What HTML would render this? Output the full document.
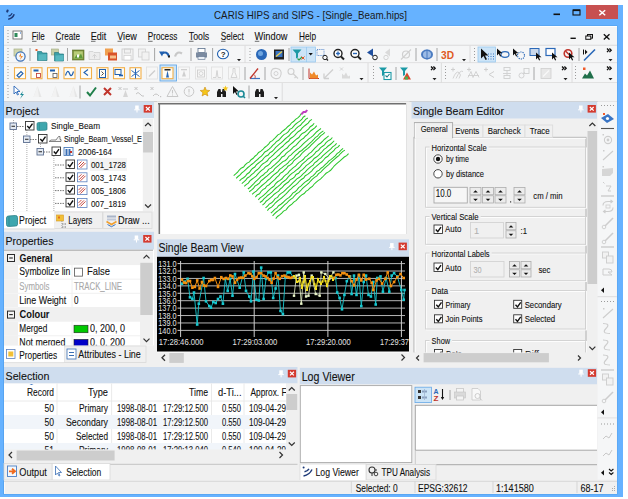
<!DOCTYPE html>
<html><head><meta charset="utf-8"><style>
html,body{margin:0;padding:0;background:#fff;width:628px;height:499px;overflow:hidden}
svg{display:block;font-family:"Liberation Sans",sans-serif}
</style></head><body>
<svg width="628" height="499" viewBox="0 0 628 499">
<rect x="0" y="0" width="628" height="499" fill="#fff" />
<rect x="0" y="5" width="623" height="492" fill="#66B2FF" />
<rect x="3.4" y="25.5" width="614" height="469" fill="#4E9CE8" />
<rect x="4" y="26" width="613" height="468" fill="#F0F0F0" />
<path d="M7.2,10.5 a1,1 0 1,0 0.1,0" fill="#1D3A78" />
<circle cx="7.6" cy="10.6" r="1.1" fill="#1D3A78"/>
<path d="M8.5,16.2 Q11,15.5 12.2,13.2" fill="none" stroke="#1D3A78" stroke-width="1.3" />
<path d="M8.2,19.2 Q12.5,18.5 14.2,14.2" fill="none" stroke="#1D3A78" stroke-width="1.6" />
<text x="214" y="19.1" font-size="11" fill="#1A1A1A" textLength="193" lengthAdjust="spacingAndGlyphs" >CARIS HIPS and SIPS - [Single_Beam.hips]</text>
<rect x="553.5" y="13.5" width="6.5" height="1.6" fill="#111" />
<rect x="573" y="10" width="7" height="5" fill="none" stroke="#111" stroke-width="1.1" />
<rect x="573" y="9.5" width="7" height="1.6" fill="#111" />
<rect x="586" y="5" width="32" height="14" fill="#C75050" />
<path d="M599.3,10.2 L605.2,15.2 M605.2,10.2 L599.3,15.2" fill="none" stroke="#fff" stroke-width="1.5" />
<rect x="4" y="26" width="613" height="1" fill="#FFFFFF" />
<rect x="4" y="27" width="613" height="18" fill="#F4F5F6" />
<line x1="4" y1="45.3" x2="617" y2="45.3" stroke="#CFCFCF" stroke-width="0.8" />
<rect x="7.5" y="30" width="1" height="1" fill="#9A9A9A" />
<rect x="7.5" y="33" width="1" height="1" fill="#9A9A9A" />
<rect x="7.5" y="36" width="1" height="1" fill="#9A9A9A" />
<rect x="7.5" y="39" width="1" height="1" fill="#9A9A9A" />
<rect x="7.5" y="42" width="1" height="1" fill="#9A9A9A" />
<rect x="13" y="31" width="9" height="8" fill="#fff" stroke="#6A6A6A" stroke-width="0.9" />
<rect x="14.5" y="33" width="3" height="4" fill="#2E8A5A" />
<rect x="20" y="32.5" width="1" height="1" fill="#2266BB" />
<text x="31.7" y="39.9" font-size="10.7" fill="#111" textLength="13" lengthAdjust="spacingAndGlyphs" stroke="#111" stroke-width="0.1" >File</text>
<line x1="32.0" y1="41.3" x2="36.5" y2="41.3" stroke="#333" stroke-width="0.7" />
<text x="55.6" y="39.9" font-size="10.7" fill="#111" textLength="24.3" lengthAdjust="spacingAndGlyphs" stroke="#111" stroke-width="0.1" >Create</text>
<line x1="55.9" y1="41.3" x2="60.4" y2="41.3" stroke="#333" stroke-width="0.7" />
<text x="90.7" y="39.9" font-size="10.7" fill="#111" textLength="15.5" lengthAdjust="spacingAndGlyphs" stroke="#111" stroke-width="0.1" >Edit</text>
<line x1="91.0" y1="41.3" x2="95.5" y2="41.3" stroke="#333" stroke-width="0.7" />
<text x="117.2" y="39.9" font-size="10.7" fill="#111" textLength="19.6" lengthAdjust="spacingAndGlyphs" stroke="#111" stroke-width="0.1" >View</text>
<line x1="117.5" y1="41.3" x2="122.0" y2="41.3" stroke="#333" stroke-width="0.7" />
<text x="147.8" y="39.9" font-size="10.7" fill="#111" textLength="29.5" lengthAdjust="spacingAndGlyphs" stroke="#111" stroke-width="0.1" >Process</text>
<line x1="148.10000000000002" y1="41.3" x2="152.60000000000002" y2="41.3" stroke="#333" stroke-width="0.7" />
<text x="188.75" y="39.9" font-size="10.7" fill="#111" textLength="20.5" lengthAdjust="spacingAndGlyphs" stroke="#111" stroke-width="0.1" >Tools</text>
<line x1="189.05" y1="41.3" x2="193.55" y2="41.3" stroke="#333" stroke-width="0.7" />
<text x="220.75" y="39.9" font-size="10.7" fill="#111" textLength="23" lengthAdjust="spacingAndGlyphs" stroke="#111" stroke-width="0.1" >Select</text>
<line x1="221.05" y1="41.3" x2="225.55" y2="41.3" stroke="#333" stroke-width="0.7" />
<text x="254.5" y="39.9" font-size="10.7" fill="#111" textLength="33" lengthAdjust="spacingAndGlyphs" stroke="#111" stroke-width="0.1" >Window</text>
<line x1="254.8" y1="41.3" x2="259.3" y2="41.3" stroke="#333" stroke-width="0.7" />
<text x="299" y="39.9" font-size="10.7" fill="#111" textLength="17" lengthAdjust="spacingAndGlyphs" stroke="#111" stroke-width="0.1" >Help</text>
<line x1="299.3" y1="41.3" x2="303.8" y2="41.3" stroke="#333" stroke-width="0.7" />
<rect x="570.5" y="37.6" width="5.3" height="1.4" fill="#111" />
<rect x="587.5" y="34.5" width="5" height="3.6" fill="none" stroke="#111" stroke-width="1" />
<rect x="585.8" y="36" width="5" height="3.3" fill="#F4F5F6" stroke="#111" stroke-width="1" />
<path d="M603.8,34.2 L609.5,39.5 M609.5,34.2 L603.8,39.5" fill="none" stroke="#111" stroke-width="1.3" />
<rect x="4" y="45.8" width="613" height="16.9" fill="#F5F6F7" />
<line x1="4" y1="62.8" x2="617" y2="62.8" stroke="#D5D5D5" stroke-width="0.8" />
<rect x="4" y="63.2" width="613" height="19.3" fill="#F5F6F7" />
<line x1="4" y1="82.7" x2="617" y2="82.7" stroke="#D5D5D5" stroke-width="0.8" />
<rect x="4" y="83" width="613" height="18.4" fill="#F3F4F5" />
<rect x="4" y="83" width="278" height="18.2" fill="#F5F6F7" />
<line x1="4" y1="101.5" x2="617" y2="101.5" stroke="#C8C8C8" stroke-width="0.9" />
<line x1="282.2" y1="83" x2="282.2" y2="101.2" stroke="#D5D5D5" stroke-width="0.8" />
<line x1="245" y1="45.8" x2="245" y2="62.8" stroke="#D5D5D5" stroke-width="0.8" />
<line x1="470" y1="45.8" x2="470" y2="62.8" stroke="#D5D5D5" stroke-width="0.8" />
<line x1="368" y1="63" x2="368" y2="82.7" stroke="#D5D5D5" stroke-width="0.8" />
<line x1="441.4" y1="63" x2="441.4" y2="82.7" stroke="#D5D5D5" stroke-width="0.8" />
<line x1="572" y1="63" x2="572" y2="82.7" stroke="#D5D5D5" stroke-width="0.8" />
<rect x="7.5" y="48" width="1" height="1" fill="#9A9A9A" />
<rect x="7.5" y="51" width="1" height="1" fill="#9A9A9A" />
<rect x="7.5" y="54" width="1" height="1" fill="#9A9A9A" />
<rect x="7.5" y="57" width="1" height="1" fill="#9A9A9A" />
<rect x="7.5" y="60" width="1" height="1" fill="#9A9A9A" />
<rect x="249.5" y="48" width="1" height="1" fill="#9A9A9A" />
<rect x="249.5" y="51" width="1" height="1" fill="#9A9A9A" />
<rect x="249.5" y="54" width="1" height="1" fill="#9A9A9A" />
<rect x="249.5" y="57" width="1" height="1" fill="#9A9A9A" />
<rect x="249.5" y="60" width="1" height="1" fill="#9A9A9A" />
<rect x="474" y="48" width="1" height="1" fill="#9A9A9A" />
<rect x="474" y="51" width="1" height="1" fill="#9A9A9A" />
<rect x="474" y="54" width="1" height="1" fill="#9A9A9A" />
<rect x="474" y="57" width="1" height="1" fill="#9A9A9A" />
<rect x="474" y="60" width="1" height="1" fill="#9A9A9A" />
<rect x="7.5" y="66" width="1" height="1" fill="#9A9A9A" />
<rect x="7.5" y="69" width="1" height="1" fill="#9A9A9A" />
<rect x="7.5" y="72" width="1" height="1" fill="#9A9A9A" />
<rect x="7.5" y="75" width="1" height="1" fill="#9A9A9A" />
<rect x="7.5" y="78" width="1" height="1" fill="#9A9A9A" />
<rect x="373" y="66" width="1" height="1" fill="#9A9A9A" />
<rect x="373" y="69" width="1" height="1" fill="#9A9A9A" />
<rect x="373" y="72" width="1" height="1" fill="#9A9A9A" />
<rect x="373" y="75" width="1" height="1" fill="#9A9A9A" />
<rect x="373" y="78" width="1" height="1" fill="#9A9A9A" />
<rect x="445" y="66" width="1" height="1" fill="#9A9A9A" />
<rect x="445" y="69" width="1" height="1" fill="#9A9A9A" />
<rect x="445" y="72" width="1" height="1" fill="#9A9A9A" />
<rect x="445" y="75" width="1" height="1" fill="#9A9A9A" />
<rect x="445" y="78" width="1" height="1" fill="#9A9A9A" />
<rect x="575" y="66" width="1" height="1" fill="#9A9A9A" />
<rect x="575" y="69" width="1" height="1" fill="#9A9A9A" />
<rect x="575" y="72" width="1" height="1" fill="#9A9A9A" />
<rect x="575" y="75" width="1" height="1" fill="#9A9A9A" />
<rect x="575" y="78" width="1" height="1" fill="#9A9A9A" />
<rect x="7.5" y="85" width="1" height="1" fill="#9A9A9A" />
<rect x="7.5" y="88" width="1" height="1" fill="#9A9A9A" />
<rect x="7.5" y="91" width="1" height="1" fill="#9A9A9A" />
<rect x="7.5" y="94" width="1" height="1" fill="#9A9A9A" />
<rect x="7.5" y="97" width="1" height="1" fill="#9A9A9A" />
<path d="M237,59 l4,0 l-2,2.2 z" fill="#222" />
<rect x="291" y="47" width="24.5" height="15" fill="#CCE4F7" stroke="#99C9EF" stroke-width="0.8" />
<line x1="306.5" y1="47" x2="306.5" y2="62" stroke="#99C9EF" stroke-width="0.8" />
<path d="M308.6,53 l4.2,0 l-2.1,2.6 z" fill="#111" />
<path d="M462,59 l4,0 l-2,2.2 z" fill="#222" />
<rect x="478" y="47" width="17.5" height="15" fill="#CCE4F7" stroke="#99C9EF" stroke-width="0.8" />
<path d="M607,48.5 l1.8,1.8 l-1.8,1.8 M609.4,48.5 l1.8,1.8 l-1.8,1.8" fill="none" stroke="#111" stroke-width="1.3" />
<path d="M608.5,59 l4,0 l-2,2.2 z" fill="#222" />
<rect x="160" y="65" width="16.5" height="16" fill="#CCE4F7" stroke="#66A8E6" stroke-width="0.9" />
<path d="M359.5,78 l4,0 l-2,2.2 z" fill="#222" />
<path d="M431,66.5 l1.8,1.8 l-1.8,1.8 M433.4,66.5 l1.8,1.8 l-1.8,1.8" fill="none" stroke="#111" stroke-width="1.3" />
<path d="M432.5,78 l4,0 l-2,2.2 z" fill="#222" />
<path d="M562,66.5 l1.8,1.8 l-1.8,1.8 M564.4,66.5 l1.8,1.8 l-1.8,1.8" fill="none" stroke="#111" stroke-width="1.3" />
<path d="M563.5,78 l4,0 l-2,2.2 z" fill="#222" />
<path d="M607,66.5 l1.8,1.8 l-1.8,1.8 M609.4,66.5 l1.8,1.8 l-1.8,1.8" fill="none" stroke="#111" stroke-width="1.3" />
<path d="M608.5,78 l4,0 l-2,2.2 z" fill="#222" />
<path d="M274,97 l4,0 l-2,2.2 z" fill="#222" />
<rect x="14.0" y="49.0" width="8" height="7" fill="#D0D6B0" stroke="#A8B088" stroke-width="0.7" />
<circle cx="20.5" cy="56.5" r="4.6" fill="#F3F6FA" stroke="#3A6FB5" stroke-width="1.2"/>
<path d="M21.0,53.0 l-2,3.5 l2,0 l-1,3.5 l3,-4 l-2,0 z" fill="#F0892A" />
<line x1="30" y1="48.0" x2="30" y2="61.0" stroke="#9C9C9C" stroke-width="0.9" />
<path d="M37.5,51.5 l4,0 l1,1.5 l4.5,0 l0,7.5 l-9.5,0 z" fill="#3A9FA8" stroke="#2A7A82" stroke-width="0.7" />
<path d="M38.5,54.5 l8,-0.5 l0,6 l-8,0.5 z" fill="#57B8C0" />
<rect x="35.5" y="49.0" width="2" height="2" fill="#E6612E" />
<rect x="51.5" y="49.0" width="7" height="6" fill="#C8D0A8" stroke="#A0A880" stroke-width="0.6" />
<path d="M54.5,52.5 l4,0 l1,1.5 l4,0 l0,7 l-9,0 z" fill="#3A9FA8" stroke="#2A7A82" stroke-width="0.7" />
<path d="M55.5,55.5 l8,-0.5 l0,5.5 l-8,0.5 z" fill="#57B8C0" />
<line x1="67.5" y1="48.0" x2="67.5" y2="61.0" stroke="#9C9C9C" stroke-width="0.9" />
<rect x="72.5" y="50.0" width="11.5" height="10" fill="#7A8F3A" stroke="#5C6F28" stroke-width="0.6" />
<rect x="73.8" y="51.3" width="9" height="7.5" fill="#B8CC78" />
<path d="M74,58.5 l3,-4 l2,2 l2,-3 l2,5 z" fill="#5E9A3A" />
<rect x="77" y="54.5" width="2" height="3" fill="#fff" />
<path d="M89,51.5 l4,0 l1,1 l6,0 l0,7 l-11,0 z" fill="#EDEDED" stroke="#CFCFCF" stroke-width="0.8" />
<path d="M94.5,58.5 l0,-4 M92.5,56.5 l2,-2 l2,2" fill="none" stroke="#CFCFCF" stroke-width="0.9" />
<rect x="105" y="48.5" width="8" height="7" fill="#F0A050" />
<rect x="108" y="52.5" width="9" height="8" fill="#D9532A" />
<rect x="110" y="55.5" width="6" height="3" fill="#F7C08A" />
<rect x="122.0" y="49.0" width="11" height="11" fill="#F2F2F2" stroke="#CFCFCF" stroke-width="0.9" />
<rect x="124.5" y="49.0" width="6" height="4" fill="none" stroke="#CFCFCF" stroke-width="0.8" />
<rect x="124.0" y="55.5" width="7" height="4.5" fill="#fff" stroke="#CFCFCF" stroke-width="0.7" />
<rect x="138.5" y="49.0" width="7" height="8" fill="#F2F2F2" stroke="#CFCFCF" stroke-width="0.8" />
<rect x="142" y="52.0" width="7" height="8" fill="#F2F2F2" stroke="#CFCFCF" stroke-width="0.8" />
<line x1="154.6" y1="48.0" x2="154.6" y2="61.0" stroke="#9C9C9C" stroke-width="0.9" />
<path d="M169,56.5 Q167,50.5 162,53.5" fill="none" stroke="#1F5FAF" stroke-width="2.2" />
<path d="M159,51.5 l5,0 l-2,5 z" fill="#1F5FAF" />
<rect x="168" y="55.5" width="2" height="2" fill="#222" />
<path d="M175,56.5 Q177,50.5 182,53.5" fill="none" stroke="#C8C8C8" stroke-width="2.2" />
<line x1="191" y1="48.0" x2="191" y2="61.0" stroke="#9C9C9C" stroke-width="0.9" />
<rect x="198" y="48.5" width="7" height="4" fill="#fff" stroke="#5A6F8A" stroke-width="0.8" />
<rect x="196" y="52.5" width="11" height="5" fill="#7A8AA0" />
<rect x="198" y="56.5" width="7" height="3" fill="#E8EEF5" stroke="#5A6F8A" stroke-width="0.6" />
<line x1="212.6" y1="48.0" x2="212.6" y2="61.0" stroke="#9C9C9C" stroke-width="0.9" />
<ellipse cx="223" cy="54.0" rx="5.5" ry="4.8" fill="#fff" stroke="#1F5FAF" stroke-width="1.1"/>
<text x="220.8" y="57.1" font-size="8" fill="#222" font-weight="bold" >?</text>
<circle cx="261.5" cy="54.5" r="5.5" fill="#2A68B8"/>
<circle cx="260.5" cy="53.5" r="2.5" fill="#6FA6E0"/>
<rect x="274" y="49.5" width="10" height="10" fill="#222" />
<rect x="275.5" y="51.0" width="7" height="6" fill="#3A75C4" />
<path d="M276,56.5 L282,51.5" fill="none" stroke="#F2D14A" stroke-width="1.2" />
<line x1="289" y1="48.0" x2="289" y2="61.0" stroke="#9C9C9C" stroke-width="0.9" />
<path d="M292.5,49.5 l9,0 l-3.5,4 l0,4 l-2,1 l0,-5 z" fill="#1C9AA6" />
<path d="M297.5,58.5 l1.5,1.5 l3,-3" fill="none" stroke="#2E9E4A" stroke-width="1.2" />
<path d="M301.5,56.5 l3,3 M304.5,56.5 l-3,3" fill="none" stroke="#E05A2A" stroke-width="1" />
<rect x="317" y="49.5" width="7" height="6" fill="none" stroke="#3A75C4" stroke-width="0.8" stroke-dasharray="1.2,1"/>
<circle cx="325" cy="57.5" r="2.2" fill="none" stroke="#222" stroke-width="1"/>
<line x1="326.5" y1="59.0" x2="328" y2="60.5" stroke="#222" stroke-width="1.2" />
<circle cx="338" cy="53.5" r="4" fill="#fff" stroke="#222" stroke-width="1.4"/>
<line x1="341" y1="56.5" x2="344" y2="59.5" stroke="#222" stroke-width="2" />
<line x1="336" y1="53.5" x2="340" y2="53.5" stroke="#2A68B8" stroke-width="1.4" />
<line x1="338" y1="51.5" x2="338" y2="55.5" stroke="#2A68B8" stroke-width="1.4" />
<circle cx="355" cy="53.5" r="4" fill="#fff" stroke="#222" stroke-width="1.4"/>
<line x1="358" y1="56.5" x2="361" y2="59.5" stroke="#222" stroke-width="2" />
<line x1="353" y1="53.5" x2="357" y2="53.5" stroke="#2A68B8" stroke-width="1.4" />
<path d="M373,48.5 l0,8 l-6,-4 z" fill="#1F4F9F" />
<circle cx="375" cy="57.5" r="2.3" fill="none" stroke="#222" stroke-width="1"/>
<path d="M390,48.5 l0,8 l-5,-4 z" fill="#DADADA" />
<circle cx="386" cy="57.5" r="2.2" fill="none" stroke="#CFCFCF" stroke-width="0.9"/>
<circle cx="406" cy="54.5" r="3.5" fill="none" stroke="#CFCFCF" stroke-width="1.2"/>
<line x1="401" y1="59.5" x2="411" y2="49.5" stroke="#CFCFCF" stroke-width="1.1" />
<line x1="416" y1="48.0" x2="416" y2="61.0" stroke="#9C9C9C" stroke-width="0.9" />
<ellipse cx="427" cy="54.5" rx="6" ry="5" fill="#4A7BC0"/>
<ellipse cx="427" cy="54.5" rx="4" ry="3.5" fill="#9DBCE6"/>
<line x1="427" y1="49.5" x2="427" y2="59.5" stroke="#4A7BC0" stroke-width="1" />
<line x1="437" y1="48.0" x2="437" y2="61.0" stroke="#9C9C9C" stroke-width="0.9" />
<text x="441" y="58.5" font-size="10" fill="#E05A1E" textLength="13" lengthAdjust="spacingAndGlyphs" font-weight="bold" >3D</text>
<path d="M481,48.5 l0,10 l2.5,-2.5 l2,4 l1.5,-0.8 l-2,-3.8 l3.5,0 z" fill="#111" />
<rect x="488.0" y="53.5" width="1" height="1" fill="#3A75C4" />
<rect x="488.0" y="56.0" width="1" height="1" fill="#3A75C4" />
<rect x="488.0" y="58.5" width="1" height="1" fill="#3A75C4" />
<rect x="490.5" y="53.5" width="1" height="1" fill="#3A75C4" />
<rect x="490.5" y="56.0" width="1" height="1" fill="#3A75C4" />
<rect x="490.5" y="58.5" width="1" height="1" fill="#3A75C4" />
<rect x="493.0" y="53.5" width="1" height="1" fill="#3A75C4" />
<rect x="493.0" y="56.0" width="1" height="1" fill="#3A75C4" />
<rect x="493.0" y="58.5" width="1" height="1" fill="#3A75C4" />
<ellipse cx="505" cy="54.5" rx="4" ry="2.8" fill="none" stroke="#2A68B8" stroke-width="1.2"/>
<path d="M497,48.5 l0,7 l1.7,-1.7 l1.4,2.7 l1.1,-0.55 l-1.4,-2.7 l2.7,0 z" fill="#111" />
<circle cx="521" cy="55.5" r="3.5" fill="none" stroke="#2A68B8" stroke-width="1.1" stroke-dasharray="1.2,1"/>
<path d="M513,48.5 l0,7 l1.7,-1.7 l1.4,2.7 l1.1,-0.55 l-1.4,-2.7 l2.7,0 z" fill="#111" />
<rect x="530" y="48.5" width="9" height="7" fill="#C9D8EC" stroke="#2A68B8" stroke-width="1" />
<path d="M536,52.5 l0,7 l1.7,-1.7 l1.4,2.7 l1.1,-0.55 l-1.4,-2.7 l2.7,0 z" fill="#111" />
<rect x="546" y="48.5" width="9" height="7" fill="#fff" stroke="#2A68B8" stroke-width="1.2" />
<path d="M552,52.5 l0,7 l1.7,-1.7 l1.4,2.7 l1.1,-0.55 l-1.4,-2.7 l2.7,0 z" fill="#111" />
<circle cx="568" cy="53.5" r="3.8" fill="none" stroke="#C0352C" stroke-width="1.6"/>
<line x1="565.5" y1="51.0" x2="570.5" y2="56.0" stroke="#C0352C" stroke-width="1.5" />
<path d="M569,52.5 l0,7 l1.7,-1.7 l1.4,2.7 l1.1,-0.55 l-1.4,-2.7 l2.7,0 z" fill="#111" />
<line x1="579" y1="48.0" x2="579" y2="61.0" stroke="#9C9C9C" stroke-width="0.9" />
<rect x="583" y="49.5" width="1" height="5" fill="#111" />
<path d="M585,49.5 l2.5,2.5 l-2.5,2.5 z" fill="#111" />
<line x1="584" y1="60.5" x2="595" y2="49.5" stroke="#2A68B8" stroke-width="1.6" />
<rect x="14.5" y="67.7" width="11" height="11" fill="#FFFDF5" stroke="#F2B04A" stroke-width="1.1" />
<path d="M17,75.5 l4,-4 l2,2 l-4,4 z" fill="none" stroke="#1F5FAF" stroke-width="1.1" />
<rect x="31.0" y="67.7" width="11" height="11" fill="#FFFDF5" stroke="#F2B04A" stroke-width="1.1" />
<rect x="33.5" y="69.5" width="5" height="2" fill="#1F5FAF" />
<rect x="36.5" y="73.5" width="4" height="4" fill="#fff" stroke="#C0352C" stroke-width="0.8" />
<rect x="47.5" y="67.7" width="11" height="11" fill="#FFFDF5" stroke="#F2B04A" stroke-width="1.1" />
<rect x="50" y="69.5" width="5" height="2" fill="#1F5FAF" />
<rect x="53" y="73.5" width="4" height="4" fill="#fff" stroke="#555" stroke-width="0.8" />
<rect x="64.0" y="67.7" width="11" height="11" fill="#FFFDF5" stroke="#F2B04A" stroke-width="1.1" />
<path d="M65.5,75.5 Q67.5,68.5 69.5,73.5 T73.5,71.5" fill="none" stroke="#1F5FAF" stroke-width="1.2" />
<rect x="80.5" y="67.7" width="11" height="11" fill="#FFFDF5" stroke="#F2B04A" stroke-width="1.1" />
<path d="M88,69.5 l-4,3 l4,3" fill="none" stroke="#1F5FAF" stroke-width="1.1" />
<rect x="97.0" y="67.7" width="11" height="11" fill="#FFFDF5" stroke="#F2B04A" stroke-width="1.1" />
<rect x="99.5" y="69.5" width="6" height="8" fill="none" stroke="#1F5FAF" stroke-width="1" />
<path d="M101.5,71.5 l2,2 l-2,2" fill="none" stroke="#222" stroke-width="0.8" />
<rect x="113.5" y="67.7" width="11" height="11" fill="#FFFDF5" stroke="#F2B04A" stroke-width="1.1" />
<rect x="115" y="69.5" width="6" height="5" fill="none" stroke="#1F5FAF" stroke-width="1" />
<path d="M119,75.5 l4,0" fill="none" stroke="#1F5FAF" stroke-width="1.6" />
<rect x="130.0" y="67.7" width="11" height="11" fill="#FFFDF5" stroke="#F2B04A" stroke-width="1.1" />
<path d="M135.5,68.5 l0,10 M131.5,70.5 l8,6 M139.5,70.5 l-8,6" fill="none" stroke="#2A68B8" stroke-width="1" />
<rect x="146.5" y="67.0" width="11" height="12" fill="#F7F7F7" stroke="#E0E0E0" stroke-width="0.9" />
<line x1="149" y1="76.5" x2="155" y2="70.5" stroke="#CFCFCF" stroke-width="1.4" />
<rect x="162.0" y="67.7" width="11" height="11" fill="#FFFDF5" stroke="#F2B04A" stroke-width="1.1" />
<rect x="164.5" y="69.0" width="6" height="1.5" fill="#222" />
<path d="M166.0,77.5 l1.5,-7 l1.5,7 z" fill="#2A68B8" />
<rect x="178.5" y="67.0" width="11" height="12" fill="#F7F7F7" stroke="#E0E0E0" stroke-width="0.9" />
<rect x="181" y="69.0" width="6" height="1.3" fill="#CFCFCF" />
<path d="M182,76.5 l2,-6 l2,6 z" fill="#CFCFCF" />
<rect x="195.5" y="67.0" width="11" height="12" fill="#F7F7F7" stroke="#E0E0E0" stroke-width="0.9" />
<rect x="197.5" y="70.0" width="7" height="7" fill="none" stroke="#CFCFCF" stroke-width="0.9" />
<circle cx="201" cy="73.5" r="2" fill="none" stroke="#CFCFCF" stroke-width="0.8"/>
<rect x="211.5" y="67.0" width="11" height="12" fill="#F7F7F7" stroke="#E0E0E0" stroke-width="0.9" />
<path d="M213,77.5 l3,0 l1,-7 l1,7 l3,0" fill="none" stroke="#CFCFCF" stroke-width="0.9" />
<rect x="228.5" y="67.0" width="11" height="12" fill="#F7F7F7" stroke="#E0E0E0" stroke-width="0.9" />
<path d="M233,68.5 l2,0 l0,4 l2,5 l-6,0 l2,-5 z" fill="none" stroke="#CFCFCF" stroke-width="0.9" />
<line x1="245" y1="67.0" x2="245" y2="80.0" stroke="#9C9C9C" stroke-width="0.9" />
<line x1="250" y1="78.5" x2="260" y2="78.5" stroke="#3A75C4" stroke-width="1.2" />
<line x1="250" y1="78.5" x2="258" y2="68.5" stroke="#C0352C" stroke-width="1.4" />
<path d="M255,78.5 Q256,75.5 254,74.5" fill="none" stroke="#C0352C" stroke-width="0.8" />
<line x1="265" y1="67.0" x2="265" y2="80.0" stroke="#9C9C9C" stroke-width="0.9" />
<path d="M271,73.5 q0,-6 6,-5 q5,1 4,6 q-1,5 -6,4 q-4,-1 -4,-5 z" fill="none" stroke="#CFCFCF" stroke-width="1.1" />
<circle cx="276" cy="73.5" r="2" fill="none" stroke="#CFCFCF" stroke-width="0.9"/>
<circle cx="291" cy="71.5" r="3" fill="none" stroke="#CFCFCF" stroke-width="1.1"/>
<path d="M293,73.5 l5,5 M296,76.5 l-1.5,1.5" fill="none" stroke="#CFCFCF" stroke-width="1.1" />
<line x1="303" y1="67.0" x2="303" y2="80.0" stroke="#9C9C9C" stroke-width="0.9" />
<line x1="309" y1="68.5" x2="309" y2="78.5" stroke="#C0352C" stroke-width="1" />
<line x1="309" y1="78.5" x2="319" y2="78.5" stroke="#C0352C" stroke-width="1" />
<path d="M310,78.5 l0,-6 l2,2 l2,-3 l2,4 l2,-1 l0,4 z" fill="#F08A2A" />
<line x1="324" y1="78.5" x2="333" y2="69.5" stroke="#CFCFCF" stroke-width="1.3" />
<path d="M324,78.5 l0,-5 M324,78.5 l5,0" fill="none" stroke="#CFCFCF" stroke-width="1.3" />
<path d="M340,67.5 l3,3 M343,67.5 l-3,3" fill="none" stroke="#CFCFCF" stroke-width="0.9" />
<path d="M342,78.5 l0,-5 l2,2 l2,-3 l2,4 l2,-1 l0,3 z" fill="#DADADA" />
<path d="M379,67.5 l8,0 l-3,3.5 l0,4 l-2,1 l0,-5 z" fill="#1C9AA6" />
<rect x="384" y="72.5" width="7" height="7" fill="#fff" stroke="#1C9AA6" stroke-width="1.1" />
<path d="M385.5,75.5 l1.5,1.5 l2.5,-3" fill="none" stroke="#1C7A86" stroke-width="1.1" />
<line x1="396" y1="67.0" x2="396" y2="80.0" stroke="#9C9C9C" stroke-width="0.9" />
<path d="M400,67.5 l8,0 l-3,3.5 l0,4 l-2,1 l0,-5 z" fill="#1C9AA6" />
<path d="M407,72.5 l4,7 l-8,0 z" fill="#D9452A" />
<rect x="405" y="76.5" width="3" height="3" fill="#4BAF4F" />
<path d="M453,67.5 l0,4 M451,69.5 l4,0" fill="none" stroke="#CFCFCF" stroke-width="1" />
<path d="M453,78.5 q3,-8 6,-6 q3,2 0,6 M456,78.5 q4,-9 7,-7" fill="none" stroke="#CFCFCF" stroke-width="0.9" />
<path d="M469,67.5 l0,4 M467,69.5 l4,0" fill="none" stroke="#CFCFCF" stroke-width="1" />
<path d="M468,77.5 l3,-6 l2,6 l3,-6 l3,6 M468,75.5 l11,0" fill="none" stroke="#CFCFCF" stroke-width="0.9" />
<path d="M486,67.5 l0,4 M484,69.5 l4,0" fill="none" stroke="#CFCFCF" stroke-width="1" />
<path d="M494,71.5 l-5,3 l5,3" fill="none" stroke="#CFCFCF" stroke-width="1" />
<rect x="504" y="67.5" width="6" height="3" fill="none" stroke="#CFCFCF" stroke-width="0.9" />
<line x1="507" y1="70.5" x2="507" y2="75.5" stroke="#CFCFCF" stroke-width="0.9" />
<line x1="503" y1="73.5" x2="511" y2="73.5" stroke="#CFCFCF" stroke-width="0.9" />
<rect x="504" y="75.5" width="6" height="3" fill="none" stroke="#CFCFCF" stroke-width="0.9" />
<circle cx="521.5" cy="75.5" r="2.5" fill="none" stroke="#CFCFCF" stroke-width="0.9"/>
<rect x="524" y="68.5" width="5" height="5" fill="none" stroke="#CFCFCF" stroke-width="0.9" />
<line x1="523" y1="73.5" x2="525" y2="72.5" stroke="#CFCFCF" stroke-width="0.9" />
<line x1="534" y1="67.0" x2="534" y2="80.0" stroke="#9C9C9C" stroke-width="0.9" />
<rect x="541" y="68.5" width="10" height="10" fill="#E8E8E8" stroke="#CFCFCF" stroke-width="0.8" />
<path d="M543,76.5 l6,-6" fill="none" stroke="#F7F7F7" stroke-width="1.5" />
<path d="M582,78.5 l3,-5 l2,2 l3,-5 l4,8 z" fill="#1F6F4A" />
<rect x="583" y="67.5" width="2.5" height="2.5" fill="#F05A2A" />
<path d="M14,86 l0,8 l2,-2 l1.5,3 l1,-0.5 l-1.5,-3 l3,0 z" fill="#fff" stroke="#2A68B8" stroke-width="0.9" />
<path d="M23,91 l-3,4 l2,0 l-2,4 l4,-5 l-2,0 z" fill="#1C8A96" />
<path d="M37.5,86 l4,11 l-8,0 z" fill="#E6E6E6" />
<path d="M37.5,86 l1.5,11 l-5.5,0 z" fill="#F2F2F2" />
<path d="M55.5,86 l4,11 l-8,0 z" fill="#E6E6E6" />
<path d="M55.5,86 l1.5,11 l-5.5,0 z" fill="#F2F2F2" />
<path d="M73.5,86 l4,11 l-8,0 z" fill="#E6E6E6" />
<path d="M73.5,86 l1.5,11 l-5.5,0 z" fill="#F2F2F2" />
<line x1="80" y1="85.5" x2="80" y2="98.5" stroke="#9C9C9C" stroke-width="0.9" />
<path d="M87,92 l3,3.5 l6,-8" fill="none" stroke="#1F7F4A" stroke-width="2" />
<path d="M104,88 l7,7 M111,88 l-7,7" fill="none" stroke="#C0352C" stroke-width="2" />
<path d="M118.5,87 l3,3 M121.5,87 l-3,3" fill="none" stroke="#C4C4C4" stroke-width="1" />
<line x1="123" y1="89" x2="128" y2="89" stroke="#C4C4C4" stroke-width="0.9" />
<path d="M125.5,90 l2.5,7 l-5,0 z" fill="#D6D6D6" />
<path d="M134.5,87 l3,3 M137.5,87 l-3,3" fill="none" stroke="#C4C4C4" stroke-width="1" />
<path d="M136,94 q2,-3 4,0 t4,2" fill="none" stroke="#C4C4C4" stroke-width="1" />
<path d="M150.5,87 l3,3 M153.5,87 l-3,3" fill="none" stroke="#C4C4C4" stroke-width="1" />
<path d="M153,96 q3,-4 6,0" fill="none" stroke="#C4C4C4" stroke-width="1" />
<rect x="160" y="96" width="1.2" height="1.2" fill="#C4C4C4" />
<path d="M172.5,86.5 l5.5,10 l-11,0 z" fill="none" stroke="#C8C8C8" stroke-width="1" />
<line x1="172.5" y1="90" x2="172.5" y2="93.5" stroke="#C8C8C8" stroke-width="1.1" />
<rect x="172" y="94.5" width="1" height="1" fill="#C8C8C8" />
<circle cx="189" cy="91.5" r="4.8" fill="none" stroke="#C8C8C8" stroke-width="1"/>
<line x1="189" y1="89" x2="189" y2="92.5" stroke="#C8C8C8" stroke-width="1.1" />
<rect x="188.5" y="93.5" width="1" height="1" fill="#C8C8C8" />
<polygon points="205.0,87.0 206.3,90.2 209.8,90.5 207.1,92.7 207.9,96.0 205.0,94.2 202.1,96.0 202.9,92.7 200.2,90.5 203.7,90.2" fill="#F5C518" stroke="#C98A10" stroke-width="0.6"/>
<path d="M217,97 l0,-5 l1.5,-3 l2,0 l0.5,3 l1,0 l0.5,-3 l2,0 l1.5,3 l0,5 l-3.5,0 l0,-3 l-1.5,0 l0,3 z" fill="#1E1E1E" />
<polygon points="225.5,85.5 226.3,87.4 228.4,87.6 226.7,88.9 227.3,90.9 225.5,89.8 223.7,90.9 224.3,88.9 222.6,87.6 224.7,87.4" fill="#F5C518"/>
<path d="M233,86 l0,8 l2,-2 l1.5,3 l1,-0.5 l-1.5,-3 l3,0 z" fill="#111" />
<circle cx="241" cy="94" r="3" fill="none" stroke="#1C8A96" stroke-width="1.6"/>
<line x1="243" y1="96" x2="245" y2="98" stroke="#1C8A96" stroke-width="1.6" />
<line x1="249" y1="85.5" x2="249" y2="98.5" stroke="#9C9C9C" stroke-width="0.9" />
<path d="M255,97 l0,-5 l1.5,-3 l2,0 l0.5,3 l1,0 l0.5,-3 l2,0 l1.5,3 l0,5 l-3.5,0 l0,-3 l-1.5,0 l0,3 z" fill="#1E1E1E" />
<rect x="4" y="101.6" width="150" height="16.8" fill="#CFDDEE" />
<text x="5.5" y="114.6" font-size="11.8" fill="#111" textLength="33.5" lengthAdjust="spacingAndGlyphs" stroke="#111" stroke-width="0.1" >Project</text>
<rect x="135.2" y="105.5" width="3.5" height="4" fill="#fff" />
<rect x="134.2" y="109.3" width="5.5" height="1" fill="#fff" />
<rect x="136.5" y="110" width="1" height="2.5" fill="#fff" />
<rect x="143.7" y="105" width="8.3" height="7.6" fill="#D43A2F" />
<path d="M145.89999999999998,107 l3.9,3.6 M149.79999999999998,107 l-3.9,3.6" fill="none" stroke="#fff" stroke-width="1.2" />
<rect x="4" y="118.4" width="150" height="93.2" fill="#FFFFFF" />
<rect x="142.8" y="119" width="10.5" height="92.5" fill="#F0F0F0" />
<rect x="143.10000000000002" y="132" width="9.9" height="20.5" fill="#CDCDCD" />
<path d="M145.05,126 l3,-3 l3,3" fill="none" stroke="#333" stroke-width="1.2" />
<path d="M145.05,204.5 l3,3 l3,-3" fill="none" stroke="#333" stroke-width="1.2" />
<rect x="13" y="120" width="0.8" height="1" fill="#999" />
<rect x="13" y="122" width="0.8" height="1" fill="#999" />
<rect x="13" y="124" width="0.8" height="1" fill="#999" />
<rect x="13" y="126" width="0.8" height="1" fill="#999" />
<rect x="13" y="128" width="0.8" height="1" fill="#999" />
<rect x="13" y="130" width="0.8" height="1" fill="#999" />
<rect x="13" y="132" width="0.8" height="1" fill="#999" />
<rect x="13" y="134" width="0.8" height="1" fill="#999" />
<rect x="13" y="136" width="0.8" height="1" fill="#999" />
<rect x="13" y="138" width="0.8" height="1" fill="#999" />
<rect x="13" y="140" width="0.8" height="1" fill="#999" />
<rect x="13" y="142" width="0.8" height="1" fill="#999" />
<rect x="13" y="144" width="0.8" height="1" fill="#999" />
<rect x="13" y="146" width="0.8" height="1" fill="#999" />
<rect x="13" y="148" width="0.8" height="1" fill="#999" />
<rect x="13" y="150" width="0.8" height="1" fill="#999" />
<rect x="13" y="152" width="0.8" height="1" fill="#999" />
<rect x="13" y="154" width="0.8" height="1" fill="#999" />
<rect x="13" y="156" width="0.8" height="1" fill="#999" />
<rect x="13" y="158" width="0.8" height="1" fill="#999" />
<rect x="13" y="160" width="0.8" height="1" fill="#999" />
<rect x="13" y="162" width="0.8" height="1" fill="#999" />
<rect x="13" y="164" width="0.8" height="1" fill="#999" />
<rect x="13" y="166" width="0.8" height="1" fill="#999" />
<rect x="13" y="168" width="0.8" height="1" fill="#999" />
<rect x="13" y="170" width="0.8" height="1" fill="#999" />
<rect x="13" y="172" width="0.8" height="1" fill="#999" />
<rect x="13" y="174" width="0.8" height="1" fill="#999" />
<rect x="13" y="176" width="0.8" height="1" fill="#999" />
<rect x="13" y="178" width="0.8" height="1" fill="#999" />
<rect x="13" y="180" width="0.8" height="1" fill="#999" />
<rect x="13" y="182" width="0.8" height="1" fill="#999" />
<rect x="13" y="184" width="0.8" height="1" fill="#999" />
<rect x="13" y="186" width="0.8" height="1" fill="#999" />
<rect x="13" y="188" width="0.8" height="1" fill="#999" />
<rect x="13" y="190" width="0.8" height="1" fill="#999" />
<rect x="13" y="192" width="0.8" height="1" fill="#999" />
<rect x="13" y="194" width="0.8" height="1" fill="#999" />
<rect x="13" y="196" width="0.8" height="1" fill="#999" />
<rect x="13" y="198" width="0.8" height="1" fill="#999" />
<rect x="13" y="200" width="0.8" height="1" fill="#999" />
<rect x="13" y="202" width="0.8" height="1" fill="#999" />
<rect x="13" y="204" width="0.8" height="1" fill="#999" />
<rect x="13" y="206" width="0.8" height="1" fill="#999" />
<rect x="13" y="208" width="0.8" height="1" fill="#999" />
<rect x="13" y="210" width="0.8" height="1" fill="#999" />
<rect x="26.5" y="128" width="0.8" height="1" fill="#999" />
<rect x="26.5" y="130" width="0.8" height="1" fill="#999" />
<rect x="26.5" y="132" width="0.8" height="1" fill="#999" />
<rect x="26.5" y="134" width="0.8" height="1" fill="#999" />
<rect x="26.5" y="136" width="0.8" height="1" fill="#999" />
<rect x="26.5" y="138" width="0.8" height="1" fill="#999" />
<rect x="26.5" y="140" width="0.8" height="1" fill="#999" />
<rect x="26.5" y="142" width="0.8" height="1" fill="#999" />
<rect x="26.5" y="144" width="0.8" height="1" fill="#999" />
<rect x="26.5" y="146" width="0.8" height="1" fill="#999" />
<rect x="26.5" y="148" width="0.8" height="1" fill="#999" />
<rect x="26.5" y="150" width="0.8" height="1" fill="#999" />
<rect x="26.5" y="152" width="0.8" height="1" fill="#999" />
<rect x="26.5" y="154" width="0.8" height="1" fill="#999" />
<rect x="26.5" y="156" width="0.8" height="1" fill="#999" />
<rect x="26.5" y="158" width="0.8" height="1" fill="#999" />
<rect x="26.5" y="160" width="0.8" height="1" fill="#999" />
<rect x="26.5" y="162" width="0.8" height="1" fill="#999" />
<rect x="26.5" y="164" width="0.8" height="1" fill="#999" />
<rect x="26.5" y="166" width="0.8" height="1" fill="#999" />
<rect x="26.5" y="168" width="0.8" height="1" fill="#999" />
<rect x="26.5" y="170" width="0.8" height="1" fill="#999" />
<rect x="26.5" y="172" width="0.8" height="1" fill="#999" />
<rect x="26.5" y="174" width="0.8" height="1" fill="#999" />
<rect x="26.5" y="176" width="0.8" height="1" fill="#999" />
<rect x="26.5" y="178" width="0.8" height="1" fill="#999" />
<rect x="26.5" y="180" width="0.8" height="1" fill="#999" />
<rect x="26.5" y="182" width="0.8" height="1" fill="#999" />
<rect x="26.5" y="184" width="0.8" height="1" fill="#999" />
<rect x="26.5" y="186" width="0.8" height="1" fill="#999" />
<rect x="26.5" y="188" width="0.8" height="1" fill="#999" />
<rect x="26.5" y="190" width="0.8" height="1" fill="#999" />
<rect x="26.5" y="192" width="0.8" height="1" fill="#999" />
<rect x="26.5" y="194" width="0.8" height="1" fill="#999" />
<rect x="26.5" y="196" width="0.8" height="1" fill="#999" />
<rect x="26.5" y="198" width="0.8" height="1" fill="#999" />
<rect x="26.5" y="200" width="0.8" height="1" fill="#999" />
<rect x="26.5" y="202" width="0.8" height="1" fill="#999" />
<rect x="26.5" y="204" width="0.8" height="1" fill="#999" />
<rect x="26.5" y="206" width="0.8" height="1" fill="#999" />
<rect x="26.5" y="208" width="0.8" height="1" fill="#999" />
<rect x="26.5" y="210" width="0.8" height="1" fill="#999" />
<rect x="40" y="140" width="0.8" height="1" fill="#999" />
<rect x="40" y="142" width="0.8" height="1" fill="#999" />
<rect x="40" y="144" width="0.8" height="1" fill="#999" />
<rect x="40" y="146" width="0.8" height="1" fill="#999" />
<rect x="53.5" y="156" width="0.8" height="1" fill="#999" />
<rect x="53.5" y="158" width="0.8" height="1" fill="#999" />
<rect x="53.5" y="160" width="0.8" height="1" fill="#999" />
<rect x="53.5" y="162" width="0.8" height="1" fill="#999" />
<rect x="53.5" y="164" width="0.8" height="1" fill="#999" />
<rect x="53.5" y="166" width="0.8" height="1" fill="#999" />
<rect x="53.5" y="168" width="0.8" height="1" fill="#999" />
<rect x="53.5" y="170" width="0.8" height="1" fill="#999" />
<rect x="53.5" y="172" width="0.8" height="1" fill="#999" />
<rect x="53.5" y="174" width="0.8" height="1" fill="#999" />
<rect x="53.5" y="176" width="0.8" height="1" fill="#999" />
<rect x="53.5" y="178" width="0.8" height="1" fill="#999" />
<rect x="53.5" y="180" width="0.8" height="1" fill="#999" />
<rect x="53.5" y="182" width="0.8" height="1" fill="#999" />
<rect x="53.5" y="184" width="0.8" height="1" fill="#999" />
<rect x="53.5" y="186" width="0.8" height="1" fill="#999" />
<rect x="53.5" y="188" width="0.8" height="1" fill="#999" />
<rect x="53.5" y="190" width="0.8" height="1" fill="#999" />
<rect x="53.5" y="192" width="0.8" height="1" fill="#999" />
<rect x="53.5" y="194" width="0.8" height="1" fill="#999" />
<rect x="53.5" y="196" width="0.8" height="1" fill="#999" />
<rect x="53.5" y="198" width="0.8" height="1" fill="#999" />
<rect x="53.5" y="200" width="0.8" height="1" fill="#999" />
<rect x="53.5" y="202" width="0.8" height="1" fill="#999" />
<rect x="53.5" y="204" width="0.8" height="1" fill="#999" />
<rect x="53.5" y="206" width="0.8" height="1" fill="#999" />
<rect x="53.5" y="208" width="0.8" height="1" fill="#999" />
<rect x="53.5" y="210" width="0.8" height="1" fill="#999" />
<rect x="10" y="123" width="6.5" height="6.5" fill="#E4EAF2" stroke="#5C6F90" stroke-width="0.9" />
<line x1="11.5" y1="126.25" x2="15" y2="126.25" stroke="#222" stroke-width="1" />
<rect x="17" y="126" width="1.5" height="1" fill="#777" />
<rect x="19.5" y="126" width="1.5" height="1" fill="#777" />
<rect x="22.0" y="126" width="1.5" height="1" fill="#777" />
<rect x="25.5" y="121.5" width="8.5" height="8.5" fill="#fff" stroke="#333" stroke-width="0.9" />
<path d="M27.3,126.0 l2,2.2 l3.2,-4.6" fill="none" stroke="#111" stroke-width="1.4" />
<path d="M37,124 q0,-1.5 1.5,-1.5 l7,-0.3 q1.5,0 1.5,1.5 l0,5.5 q0,1 -1.5,1 l-7,0.3 q-1.5,0 -1.5,-1.5 z" fill="#3FA7AE" stroke="#2A7F86" stroke-width="0.7" />
<line x1="39.3" y1="122.8" x2="39.3" y2="130" stroke="#2A7F86" stroke-width="0.6" />
<text x="51" y="128.9" font-size="9.8" fill="#111" textLength="49" lengthAdjust="spacingAndGlyphs" stroke="#111" stroke-width="0.1" >Single_Beam</text>
<rect x="23.5" y="136" width="6.5" height="6.5" fill="#E4EAF2" stroke="#5C6F90" stroke-width="0.9" />
<line x1="25.0" y1="139.25" x2="28.5" y2="139.25" stroke="#222" stroke-width="1" />
<rect x="30" y="139" width="1.5" height="1" fill="#777" />
<rect x="32.5" y="139" width="1.5" height="1" fill="#777" />
<rect x="35.0" y="139" width="1.5" height="1" fill="#777" />
<rect x="38.5" y="134.5" width="8.5" height="8.5" fill="#fff" stroke="#333" stroke-width="0.9" />
<path d="M40.3,139.0 l2,2.2 l3.2,-4.6" fill="none" stroke="#111" stroke-width="1.4" />
<path d="M49,141.5 l2,-1.5 l5,0 l2.5,-3.5 l1.5,0 l0,3 l1,0 l0,2 z" fill="#F4F4F4" stroke="#666" stroke-width="0.8" />
<text x="64" y="141.6" font-size="9.8" fill="#111" textLength="78" lengthAdjust="spacingAndGlyphs" stroke="#111" stroke-width="0.1" >Single_Beam_Vessel_E</text>
<rect x="37" y="148.5" width="6.5" height="6.5" fill="#E4EAF2" stroke="#5C6F90" stroke-width="0.9" />
<line x1="38.5" y1="151.75" x2="42" y2="151.75" stroke="#222" stroke-width="1" />
<rect x="43.5" y="151.5" width="1.5" height="1" fill="#777" />
<rect x="46.0" y="151.5" width="1.5" height="1" fill="#777" />
<rect x="48.5" y="151.5" width="1.5" height="1" fill="#777" />
<rect x="52" y="147" width="8.5" height="8.5" fill="#fff" stroke="#333" stroke-width="0.9" />
<path d="M53.8,151.5 l2,2.2 l3.2,-4.6" fill="none" stroke="#111" stroke-width="1.4" />
<rect x="64" y="147.5" width="9" height="8" fill="#fff" stroke="#3A6FB5" stroke-width="0.8" />
<rect x="65.5" y="149" width="2" height="6" fill="#3A6FB5" />
<rect x="68.5" y="149" width="2" height="6" fill="#3A6FB5" />
<rect x="70" y="151" width="2" height="2" fill="#C0352C" />
<text x="78" y="154.7" font-size="9.8" fill="#111" textLength="34" lengthAdjust="spacingAndGlyphs" stroke="#111" stroke-width="0.1" >2006-164</text>
<rect x="90" y="158" width="37" height="13" fill="#F3F3F3" />
<rect x="55" y="164.5" width="1.5" height="1" fill="#777" />
<rect x="57.5" y="164.5" width="1.5" height="1" fill="#777" />
<rect x="60.0" y="164.5" width="1.5" height="1" fill="#777" />
<rect x="62.5" y="164.5" width="1.5" height="1" fill="#777" />
<rect x="66" y="160.0" width="8.5" height="8.5" fill="#fff" stroke="#333" stroke-width="0.9" />
<path d="M67.8,164.5 l2,2.2 l3.2,-4.6" fill="none" stroke="#111" stroke-width="1.4" />
<rect x="77.5" y="160.0" width="9.5" height="9" fill="#fff" stroke="#5A7FBF" stroke-width="0.8" />
<path d="M79,167.0 l5,-5 M80.5,168.0 l5,-5 M78.5,164.5 l3,-3" fill="none" stroke="#C0352C" stroke-width="0.9" />
<text x="91" y="168.3" font-size="9.6" fill="#111" textLength="35" lengthAdjust="spacingAndGlyphs" stroke="#111" stroke-width="0.1" >001_1728</text>
<rect x="55" y="177.3" width="1.5" height="1" fill="#777" />
<rect x="57.5" y="177.3" width="1.5" height="1" fill="#777" />
<rect x="60.0" y="177.3" width="1.5" height="1" fill="#777" />
<rect x="62.5" y="177.3" width="1.5" height="1" fill="#777" />
<rect x="66" y="172.8" width="8.5" height="8.5" fill="#fff" stroke="#333" stroke-width="0.9" />
<path d="M67.8,177.3 l2,2.2 l3.2,-4.6" fill="none" stroke="#111" stroke-width="1.4" />
<rect x="77.5" y="172.8" width="9.5" height="9" fill="#fff" stroke="#5A7FBF" stroke-width="0.8" />
<path d="M79,179.8 l5,-5 M80.5,180.8 l5,-5 M78.5,177.3 l3,-3" fill="none" stroke="#C0352C" stroke-width="0.9" />
<text x="91" y="181.10000000000002" font-size="9.6" fill="#111" textLength="35" lengthAdjust="spacingAndGlyphs" stroke="#111" stroke-width="0.1" >003_1743</text>
<rect x="55" y="190.1" width="1.5" height="1" fill="#777" />
<rect x="57.5" y="190.1" width="1.5" height="1" fill="#777" />
<rect x="60.0" y="190.1" width="1.5" height="1" fill="#777" />
<rect x="62.5" y="190.1" width="1.5" height="1" fill="#777" />
<rect x="66" y="185.6" width="8.5" height="8.5" fill="#fff" stroke="#333" stroke-width="0.9" />
<path d="M67.8,190.1 l2,2.2 l3.2,-4.6" fill="none" stroke="#111" stroke-width="1.4" />
<rect x="77.5" y="185.6" width="9.5" height="9" fill="#fff" stroke="#5A7FBF" stroke-width="0.8" />
<path d="M79,192.6 l5,-5 M80.5,193.6 l5,-5 M78.5,190.1 l3,-3" fill="none" stroke="#C0352C" stroke-width="0.9" />
<text x="91" y="193.9" font-size="9.6" fill="#111" textLength="35" lengthAdjust="spacingAndGlyphs" stroke="#111" stroke-width="0.1" >005_1806</text>
<rect x="55" y="202.9" width="1.5" height="1" fill="#777" />
<rect x="57.5" y="202.9" width="1.5" height="1" fill="#777" />
<rect x="60.0" y="202.9" width="1.5" height="1" fill="#777" />
<rect x="62.5" y="202.9" width="1.5" height="1" fill="#777" />
<rect x="66" y="198.4" width="8.5" height="8.5" fill="#fff" stroke="#333" stroke-width="0.9" />
<path d="M67.8,202.9 l2,2.2 l3.2,-4.6" fill="none" stroke="#111" stroke-width="1.4" />
<rect x="77.5" y="198.4" width="9.5" height="9" fill="#fff" stroke="#5A7FBF" stroke-width="0.8" />
<path d="M79,205.4 l5,-5 M80.5,206.4 l5,-5 M78.5,202.9 l3,-3" fill="none" stroke="#C0352C" stroke-width="0.9" />
<text x="91" y="206.70000000000002" font-size="9.6" fill="#111" textLength="35" lengthAdjust="spacingAndGlyphs" stroke="#111" stroke-width="0.1" >007_1819</text>
<rect x="4" y="211.5" width="150" height="17.5" fill="#F0F0F0" />
<rect x="54.5" y="212" width="48" height="16.5" fill="#F0F0F0" stroke="#D9D9D9" stroke-width="0.8" />
<text x="68.3" y="224.0" font-size="10.3" fill="#111" textLength="24" lengthAdjust="spacingAndGlyphs" stroke="#111" stroke-width="0.1" >Layers</text>
<rect x="103" y="212" width="49" height="16.5" fill="#F0F0F0" stroke="#D9D9D9" stroke-width="0.8" />
<text x="118" y="224.0" font-size="10.3" fill="#111" textLength="31.7" lengthAdjust="spacingAndGlyphs" stroke="#111" stroke-width="0.1" >Draw ...</text>
<rect x="4" y="211.5" width="50.5" height="17" fill="#FFFFFF" />
<line x1="4" y1="229" x2="54.5" y2="229" stroke="#D9D9D9" stroke-width="0.8" />
<path d="M6.5,218 q0,-2 2,-2 l7,-0.5 q2,0 2,2 l0,7 q0,1.5 -2,1.5 l-7,0.5 q-2,0 -2,-2 z" fill="#3FA7AE" stroke="#2A7F86" stroke-width="0.8" />
<line x1="9" y1="216.5" x2="9" y2="226" stroke="#2A7F86" stroke-width="0.7" />
<text x="19.1" y="224.2" font-size="10.3" fill="#111" textLength="27" lengthAdjust="spacingAndGlyphs" stroke="#111" stroke-width="0.1" >Project</text>
<rect x="56.5" y="215" width="7" height="6" fill="#F2C037" stroke="#D89A20" stroke-width="0.6" />
<rect x="58" y="216.5" width="2" height="2" fill="#E07020" />
<rect x="61.5" y="221" width="0.8" height="1" fill="#999" />
<rect x="61.5" y="223" width="0.8" height="1" fill="#999" />
<rect x="61.5" y="225" width="0.8" height="1" fill="#999" />
<rect x="61.5" y="227" width="0.8" height="1" fill="#999" />
<rect x="62" y="223.5" width="1.5" height="1" fill="#777" />
<rect x="64.5" y="223.5" width="1.5" height="1" fill="#777" />
<rect x="62" y="226.5" width="1.5" height="1" fill="#777" />
<rect x="64.5" y="226.5" width="1.5" height="1" fill="#777" />
<rect x="107" y="215.5" width="9" height="2" fill="#A8B4C8" />
<rect x="107" y="218.5" width="9" height="2" fill="#C0C8D8" />
<path d="M106.5,221.5 l5,3 l5,-3" fill="none" stroke="#F0A030" stroke-width="1.6" />
<path d="M107.5,224.5 l4,2.2 l4,-2.2" fill="none" stroke="#3A75C4" stroke-width="1" />
<rect x="4" y="231.8" width="150" height="17.9" fill="#CFDDEE" />
<text x="5.5" y="245.2" font-size="11.8" fill="#111" textLength="48" lengthAdjust="spacingAndGlyphs" stroke="#111" stroke-width="0.1" >Properties</text>
<rect x="134.7" y="235.5" width="3.5" height="4" fill="#fff" />
<rect x="133.7" y="239.3" width="5.5" height="1" fill="#fff" />
<rect x="136.0" y="240" width="1" height="2.5" fill="#fff" />
<rect x="143.2" y="235" width="8.3" height="7.6" fill="#D43A2F" />
<path d="M145.39999999999998,237 l3.9,3.6 M149.29999999999998,237 l-3.9,3.6" fill="none" stroke="#fff" stroke-width="1.2" />
<rect x="4" y="249.7" width="150" height="96" fill="#fff" />
<rect x="4" y="251.0" width="136" height="14.1" fill="#F0F0F0" />
<rect x="7.5" y="254.5" width="7" height="7" fill="#F4F4F4" stroke="#2A2A2A" stroke-width="1" />
<line x1="9.2" y1="258.0" x2="12.8" y2="258.0" stroke="#222" stroke-width="1.1" />
<text x="19.5" y="261.6" font-size="10.6" fill="#111" textLength="33" lengthAdjust="spacingAndGlyphs" font-weight="bold" >General</text>
<rect x="4" y="265.15" width="14" height="14.1" fill="#F0F0F0" />
<line x1="18" y1="279.15" x2="140" y2="279.15" stroke="#F0F0F0" stroke-width="1" />
<line x1="72" y1="265.15" x2="72" y2="279.15" stroke="#F0F0F0" stroke-width="1" />
<text x="19.3" y="275.34999999999997" font-size="10.6" fill="#111" textLength="51" lengthAdjust="spacingAndGlyphs" stroke="#111" stroke-width="0.1" >Symbolize lin</text>
<rect x="74.5" y="268.15" width="8" height="8" fill="#fff" stroke="#555" stroke-width="0.8" />
<text x="87" y="275.34999999999997" font-size="10.6" fill="#111" textLength="23" lengthAdjust="spacingAndGlyphs" stroke="#111" stroke-width="0.1" >False</text>
<rect x="4" y="279.3" width="14" height="14.1" fill="#F0F0F0" />
<line x1="18" y1="293.3" x2="140" y2="293.3" stroke="#F0F0F0" stroke-width="1" />
<line x1="72" y1="279.3" x2="72" y2="293.3" stroke="#F0F0F0" stroke-width="1" />
<text x="19.3" y="289.5" font-size="10.6" fill="#A8A8A8" textLength="30" lengthAdjust="spacingAndGlyphs" stroke="#A8A8A8" stroke-width="0.1" >Symbols</text>
<text x="74" y="289.5" font-size="10.6" fill="#A8A8A8" textLength="48" lengthAdjust="spacingAndGlyphs" stroke="#A8A8A8" stroke-width="0.1" >TRACK_LINE</text>
<rect x="4" y="293.45" width="14" height="14.1" fill="#F0F0F0" />
<line x1="18" y1="307.45" x2="140" y2="307.45" stroke="#F0F0F0" stroke-width="1" />
<line x1="72" y1="293.45" x2="72" y2="307.45" stroke="#F0F0F0" stroke-width="1" />
<text x="19.3" y="303.65" font-size="10.6" fill="#111" textLength="47" lengthAdjust="spacingAndGlyphs" stroke="#111" stroke-width="0.1" >Line Weight</text>
<text x="74" y="303.65" font-size="10.6" fill="#111" textLength="4.5" lengthAdjust="spacingAndGlyphs" stroke="#111" stroke-width="0.1" >0</text>
<rect x="4" y="307.6" width="136" height="14.1" fill="#F0F0F0" />
<rect x="7.5" y="311.1" width="7" height="7" fill="#F4F4F4" stroke="#2A2A2A" stroke-width="1" />
<line x1="9.2" y1="314.6" x2="12.8" y2="314.6" stroke="#222" stroke-width="1.1" />
<text x="19.5" y="318.20000000000005" font-size="10.6" fill="#111" textLength="30" lengthAdjust="spacingAndGlyphs" font-weight="bold" >Colour</text>
<rect x="4" y="321.75" width="14" height="14.1" fill="#F0F0F0" />
<line x1="18" y1="335.75" x2="140" y2="335.75" stroke="#F0F0F0" stroke-width="1" />
<line x1="72" y1="321.75" x2="72" y2="335.75" stroke="#F0F0F0" stroke-width="1" />
<text x="19.3" y="331.95" font-size="10.6" fill="#111" textLength="28" lengthAdjust="spacingAndGlyphs" stroke="#111" stroke-width="0.1" >Merged</text>
<rect x="74" y="325.25" width="14" height="7.5" fill="#00C800" stroke="#222" stroke-width="0.6" />
<text x="90" y="331.95" font-size="10.6" fill="#111" textLength="35" lengthAdjust="spacingAndGlyphs" stroke="#111" stroke-width="0.1" >0, 200, 0</text>
<rect x="4" y="335.9" width="14" height="14.1" fill="#F0F0F0" />
<line x1="18" y1="349.9" x2="140" y2="349.9" stroke="#F0F0F0" stroke-width="1" />
<line x1="72" y1="335.9" x2="72" y2="349.9" stroke="#F0F0F0" stroke-width="1" />
<text x="19.3" y="346.09999999999997" font-size="10.6" fill="#111" textLength="46" lengthAdjust="spacingAndGlyphs" stroke="#111" stroke-width="0.1" >Not merged</text>
<rect x="74" y="339.4" width="14" height="7.5" fill="#0000C8" stroke="#222" stroke-width="0.6" />
<text x="90" y="346.09999999999997" font-size="10.6" fill="#111" textLength="35" lengthAdjust="spacingAndGlyphs" stroke="#111" stroke-width="0.1" >0, 0, 200</text>
<rect x="140" y="251.4" width="13" height="94.2" fill="#F0F0F0" />
<rect x="140.3" y="262.8" width="12.4" height="52.19999999999999" fill="#CDCDCD" />
<path d="M143.5,258.4 l3,-3 l3,3" fill="none" stroke="#333" stroke-width="1.2" />
<path d="M143.5,338.6 l3,3 l3,-3" fill="none" stroke="#333" stroke-width="1.2" />
<line x1="4" y1="250.2" x2="153" y2="250.2" stroke="#A0A0A0" stroke-width="1" />
<rect x="4" y="345.6" width="150" height="17" fill="#F0F0F0" />
<rect x="64" y="346" width="82" height="16.5" fill="#F0F0F0" stroke="#D9D9D9" stroke-width="0.8" />
<text x="78.3" y="358.0" font-size="10.3" fill="#111" textLength="62.5" lengthAdjust="spacingAndGlyphs" stroke="#111" stroke-width="0.1" >Attributes - Line</text>
<rect x="4" y="345.6" width="60" height="17" fill="#fff" />
<line x1="4" y1="362.6" x2="64" y2="362.6" stroke="#D9D9D9" stroke-width="0.8" />
<rect x="6.5" y="349.5" width="8.5" height="9" fill="#fff" stroke="#5A7FBF" stroke-width="0.8" />
<rect x="8.3" y="351.5" width="5" height="5" fill="#F2C037" />
<text x="19.3" y="358.5" font-size="10.3" fill="#111" textLength="37.8" lengthAdjust="spacingAndGlyphs" stroke="#111" stroke-width="0.1" >Properties</text>
<rect x="67" y="349" width="9" height="10" fill="#fff" stroke="#3A6FB5" stroke-width="0.8" />
<rect x="69" y="352" width="5" height="1" fill="#3A6FB5" />
<rect x="69" y="355" width="5" height="1" fill="#3A6FB5" />
<rect x="4" y="367" width="293.5" height="16.5" fill="#CFDDEE" />
<text x="5.5" y="379.8" font-size="11.8" fill="#111" textLength="44" lengthAdjust="spacingAndGlyphs" stroke="#111" stroke-width="0.1" >Selection</text>
<rect x="279.3" y="370.3" width="3.5" height="4" fill="#fff" />
<rect x="278.3" y="374.1" width="5.5" height="1" fill="#fff" />
<rect x="280.6" y="374.8" width="1" height="2.5" fill="#fff" />
<rect x="287.8" y="369.8" width="8.3" height="7.6" fill="#D43A2F" />
<path d="M290.0,371.8 l3.9,3.6 M293.90000000000003,371.8 l-3.9,3.6" fill="none" stroke="#fff" stroke-width="1.2" />
<rect x="4" y="383.5" width="282" height="66" fill="#fff" />
<line x1="57" y1="383.5" x2="57" y2="449" stroke="#E8E8E8" stroke-width="0.9" />
<line x1="111.6" y1="383.5" x2="111.6" y2="449" stroke="#E8E8E8" stroke-width="0.9" />
<line x1="211.5" y1="383.5" x2="211.5" y2="449" stroke="#E8E8E8" stroke-width="0.9" />
<line x1="244" y1="383.5" x2="244" y2="449" stroke="#E8E8E8" stroke-width="0.9" />
<line x1="4" y1="401" x2="286" y2="401" stroke="#E8E8E8" stroke-width="0.9" />
<text x="27" y="396.3" font-size="11.2" fill="#111" textLength="27" lengthAdjust="spacingAndGlyphs" stroke="#111" stroke-width="0.1" >Record</text>
<text x="88" y="396.3" font-size="11.2" fill="#111" textLength="20" lengthAdjust="spacingAndGlyphs" stroke="#111" stroke-width="0.1" >Type</text>
<text x="189" y="396.3" font-size="11.2" fill="#111" textLength="19" lengthAdjust="spacingAndGlyphs" stroke="#111" stroke-width="0.1" >Time</text>
<text x="218.0" y="396.3" font-size="11.2" fill="#111" textLength="23.5" lengthAdjust="spacingAndGlyphs" stroke="#111" stroke-width="0.1" >d-Ti...</text>
<text x="250.5" y="396.3" font-size="11.2" fill="#111" textLength="36" lengthAdjust="spacingAndGlyphs" stroke="#111" stroke-width="0.1" >Approx. F</text>
<path d="M29.5,385 l2,-1 l2,1" fill="#3A75C4" />
<text x="44.5" y="412" font-size="11.2" fill="#111" textLength="9.5" lengthAdjust="spacingAndGlyphs" stroke="#111" stroke-width="0.1" >50</text>
<text x="79" y="412" font-size="11.2" fill="#111" textLength="29" lengthAdjust="spacingAndGlyphs" stroke="#111" stroke-width="0.1" >Primary</text>
<text x="117" y="412" font-size="11.2" fill="#111" textLength="40" lengthAdjust="spacingAndGlyphs" stroke="#111" stroke-width="0.1" >1998-08-01</text>
<text x="163" y="412" font-size="11.2" fill="#111" textLength="45" lengthAdjust="spacingAndGlyphs" stroke="#111" stroke-width="0.1" >17:29:12.500</text>
<text x="222" y="412" font-size="11.2" fill="#111" textLength="19" lengthAdjust="spacingAndGlyphs" stroke="#111" stroke-width="0.1" >0.550</text>
<text x="249" y="412" font-size="11.2" fill="#111" textLength="37" lengthAdjust="spacingAndGlyphs" stroke="#111" stroke-width="0.1" >109-04-29</text>
<rect x="4" y="415" width="282" height="14" fill="#F1F5FA" />
<text x="44.5" y="426" font-size="11.2" fill="#111" textLength="9.5" lengthAdjust="spacingAndGlyphs" stroke="#111" stroke-width="0.1" >50</text>
<text x="66" y="426" font-size="11.2" fill="#111" textLength="42" lengthAdjust="spacingAndGlyphs" stroke="#111" stroke-width="0.1" >Secondary</text>
<text x="117" y="426" font-size="11.2" fill="#111" textLength="40" lengthAdjust="spacingAndGlyphs" stroke="#111" stroke-width="0.1" >1998-08-01</text>
<text x="163" y="426" font-size="11.2" fill="#111" textLength="45" lengthAdjust="spacingAndGlyphs" stroke="#111" stroke-width="0.1" >17:29:12.500</text>
<text x="222" y="426" font-size="11.2" fill="#111" textLength="19" lengthAdjust="spacingAndGlyphs" stroke="#111" stroke-width="0.1" >0.550</text>
<text x="249" y="426" font-size="11.2" fill="#111" textLength="37" lengthAdjust="spacingAndGlyphs" stroke="#111" stroke-width="0.1" >109-04-29</text>
<text x="44.5" y="440" font-size="11.2" fill="#111" textLength="9.5" lengthAdjust="spacingAndGlyphs" stroke="#111" stroke-width="0.1" >50</text>
<text x="76" y="440" font-size="11.2" fill="#111" textLength="32" lengthAdjust="spacingAndGlyphs" stroke="#111" stroke-width="0.1" >Selected</text>
<text x="117" y="440" font-size="11.2" fill="#111" textLength="40" lengthAdjust="spacingAndGlyphs" stroke="#111" stroke-width="0.1" >1998-08-01</text>
<text x="163" y="440" font-size="11.2" fill="#111" textLength="45" lengthAdjust="spacingAndGlyphs" stroke="#111" stroke-width="0.1" >17:29:12.500</text>
<text x="222" y="440" font-size="11.2" fill="#111" textLength="19" lengthAdjust="spacingAndGlyphs" stroke="#111" stroke-width="0.1" >0.550</text>
<text x="249" y="440" font-size="11.2" fill="#111" textLength="37" lengthAdjust="spacingAndGlyphs" stroke="#111" stroke-width="0.1" >109-04-29</text>
<rect x="4" y="443" width="282" height="14" fill="#F1F5FA" />
<text x="44.5" y="454" font-size="11.2" fill="#111" textLength="9.5" lengthAdjust="spacingAndGlyphs" stroke="#111" stroke-width="0.1" >51</text>
<text x="79" y="454" font-size="11.2" fill="#111" textLength="29" lengthAdjust="spacingAndGlyphs" stroke="#111" stroke-width="0.1" >Primary</text>
<text x="117" y="454" font-size="11.2" fill="#111" textLength="40" lengthAdjust="spacingAndGlyphs" stroke="#111" stroke-width="0.1" >1998-08-01</text>
<text x="163" y="454" font-size="11.2" fill="#111" textLength="45" lengthAdjust="spacingAndGlyphs" stroke="#111" stroke-width="0.1" >17:29:13.040</text>
<text x="222" y="454" font-size="11.2" fill="#111" textLength="19" lengthAdjust="spacingAndGlyphs" stroke="#111" stroke-width="0.1" >0.540</text>
<text x="249" y="454" font-size="11.2" fill="#111" textLength="37" lengthAdjust="spacingAndGlyphs" stroke="#111" stroke-width="0.1" >109-04-29</text>
<rect x="4" y="449" width="282" height="0.1" fill="#fff" />
<rect x="286" y="383.5" width="11.5" height="66" fill="#F0F0F0" />
<rect x="286.3" y="394" width="10.9" height="16" fill="#CDCDCD" />
<path d="M288.75,390.5 l3,-3 l3,3" fill="none" stroke="#333" stroke-width="1.2" />
<path d="M288.75,442.5 l3,3 l3,-3" fill="none" stroke="#333" stroke-width="1.2" />
<rect x="4" y="449.4" width="293.5" height="12" fill="#F0F0F0" />
<rect x="16.6" y="450.5" width="98" height="10" fill="#CDCDCD" />
<path d="M12,452 l-3,3 l3,3" fill="none" stroke="#333" stroke-width="1.2" />
<path d="M279.5,452 l3,3 l-3,3" fill="none" stroke="#333" stroke-width="1.2" />
<rect x="4" y="461.5" width="293.5" height="2" fill="#F0F0F0" />
<line x1="110" y1="464.3" x2="297.5" y2="464.3" stroke="#C4C4C4" stroke-width="1" />
<rect x="52" y="463.4" width="58" height="16.6" fill="#FFFFFF" stroke="#D9D9D9" stroke-width="0.8" />
<text x="66.3" y="475.5" font-size="10.3" fill="#111" textLength="35" lengthAdjust="spacingAndGlyphs" stroke="#111" stroke-width="0.1" >Selection</text>
<rect x="4" y="463.4" width="48" height="16.6" fill="#F0F0F0" stroke="#D9D9D9" stroke-width="0.8" />
<rect x="7.5" y="466" width="9" height="10.5" fill="#F4F8FC" stroke="#4A7FC5" stroke-width="0.9" />
<path d="M9,471.3 l5,0 M12,468.8 l3,2.5 l-3,2.5" fill="none" stroke="#F06A1C" stroke-width="1.8" />
<text x="19.3" y="475.6" font-size="10.3" fill="#111" textLength="27.5" lengthAdjust="spacingAndGlyphs" stroke="#111" stroke-width="0.1" >Output</text>
<path d="M55.5,466 l0,9 l2,-2 l1.5,3 l1,-0.5 l-1.5,-3 l3,0 z" fill="#fff" stroke="#3A6FB5" stroke-width="0.8" />
<rect x="157" y="101.5" width="252.5" height="137" fill="#F0F0F0" />
<rect x="158" y="103" width="249" height="131" fill="#fff" />
<line x1="158" y1="103.8" x2="407" y2="103.8" stroke="#707070" stroke-width="1.6" />
<line x1="159.3" y1="103" x2="159.3" y2="234" stroke="#707070" stroke-width="1.6" />
<line x1="406.5" y1="103" x2="406.5" y2="234" stroke="#E2E2E2" stroke-width="1" />
<polyline points="233.68,175.60 235.68,173.91 237.62,172.17 239.22,170.03 241.13,168.24 243.55,167.04 245.14,164.89 247.06,163.11 249.45,161.87 251.07,159.75 253.22,158.24 254.94,156.24 256.97,154.59 258.62,152.50 260.84,151.07 262.91,149.47 264.64,147.48 266.70,145.87 268.60,144.06 270.17,141.89 272.51,140.60 274.35,138.73 276.11,136.78 277.89,134.84 280.31,133.64 282.02,131.62 284.10,130.03 286.12,128.37 287.96,126.50 290.02,124.89 291.64,122.77 293.81,121.29 295.54,119.29 297.76,117.86 299.66,116.06 301.13,113.78 303.31,112.29" fill="none" stroke="#2AC62A" stroke-width="1.05"/>
<polyline points="236.12,178.29 238.01,176.51 240.05,174.90 241.78,172.95 243.82,171.35 245.67,169.53 247.58,167.77 249.64,166.19 251.56,164.46 253.68,162.94 255.47,161.05 257.54,159.48 259.42,157.70 261.42,156.05 263.15,154.10 264.78,152.02 267.11,150.76 269.10,149.09 270.99,147.32 272.71,145.36 274.72,143.72 276.35,141.64 278.64,140.33 280.41,138.42 282.16,136.48 283.95,134.60 286.35,133.40 288.35,131.75 289.74,129.41 292.08,128.15 293.78,126.15 295.55,124.24 297.55,122.60 299.76,121.19 301.75,119.52 303.18,117.23 305.37,115.80" fill="none" stroke="#2AC62A" stroke-width="1.05"/>
<polyline points="239.50,180.97 241.29,179.11 243.52,177.73 245.47,176.05 247.09,173.98 249.28,172.56 250.77,170.34 252.53,168.44 254.74,167.04 256.30,164.91 258.29,163.27 260.31,161.66 262.33,160.05 263.96,157.99 265.79,156.16 268.18,154.97 269.75,152.84 272.03,151.53 273.89,149.74 275.48,147.64 277.42,145.94 279.36,144.23 281.33,142.56 283.20,140.78 285.07,139.01 287.01,137.30 289.09,135.76 290.73,133.72 292.59,131.92 294.66,130.36 296.27,128.29 298.20,126.58 300.50,125.29 302.13,123.23 304.04,121.50 305.62,119.38 307.81,117.96" fill="none" stroke="#2AC62A" stroke-width="1.05"/>
<polyline points="241.78,183.66 243.80,181.96 245.76,180.18 247.37,178.01 249.65,176.61 251.51,174.71 253.58,173.07 255.34,171.07 257.50,169.52 259.46,167.76 260.99,165.49 262.96,163.73 265.27,162.36 267.39,160.77 268.92,158.50 270.99,156.86 273.02,155.16 274.81,153.20 276.78,151.44 278.70,149.62 280.68,147.87 282.77,146.24 284.54,144.26 286.53,142.52 288.72,141.01 290.22,138.72 292.49,137.30 294.54,135.62 296.24,133.55 298.14,131.71 300.43,130.32 302.04,128.15 303.96,126.33 306.06,124.71 308.16,123.10 309.76,120.92 311.94,119.40" fill="none" stroke="#2AC62A" stroke-width="1.05"/>
<polyline points="244.24,186.35 246.15,184.56 248.34,183.08 249.87,180.87 251.92,179.23 254.05,177.69 256.13,176.09 257.81,174.05 259.62,172.14 261.51,170.32 263.69,168.84 265.43,166.86 267.74,165.53 269.70,163.80 271.26,161.60 273.26,159.91 275.52,158.52 277.36,156.65 279.40,155.01 281.07,152.95 282.89,151.05 284.93,149.41 287.17,147.99 288.80,145.89 290.79,144.19 292.77,142.48 294.72,140.73 296.66,138.97 298.90,137.56 300.39,135.29 302.25,133.44 304.75,132.32 306.65,130.53 308.66,128.84 310.28,126.72 312.53,125.32 314.20,123.26" fill="none" stroke="#2AC62A" stroke-width="1.05"/>
<polyline points="247.82,189.04 249.93,187.50 251.74,185.63 253.57,183.77 255.35,181.85 257.30,180.13 259.15,178.29 260.97,176.43 263.19,175.02 264.93,173.05 267.16,171.65 268.62,169.37 271.04,168.19 272.84,166.29 274.89,164.68 276.79,162.90 278.70,161.15 280.43,159.17 282.01,157.03 284.36,155.76 285.94,153.61 287.93,151.94 290.06,150.43 291.89,148.57 293.74,146.74 295.97,145.33 297.69,143.35 299.45,141.41 301.31,139.59 303.59,138.24 305.27,136.22 307.37,134.67 309.03,132.61 310.86,130.75 312.97,129.22 315.06,127.65 316.78,125.67" fill="none" stroke="#2AC62A" stroke-width="1.05"/>
<polyline points="249.21,191.72 251.39,190.18 253.39,188.43 254.90,186.12 257.26,184.79 259.40,183.19 260.91,180.89 263.03,179.28 265.03,177.52 267.17,175.94 269.11,174.11 271.13,172.39 273.31,170.84 274.84,168.56 276.86,166.84 278.90,165.13 280.89,163.38 282.86,161.58 285.39,160.44 287.31,158.60 288.85,156.33 291.09,154.85 292.97,152.97 294.97,151.21 296.98,149.48 299.15,147.93 301.11,146.13 302.97,144.22 304.86,142.35 306.94,140.69 308.81,138.79 311.06,137.33 313.15,135.68 314.95,133.70 316.76,131.74 318.81,130.05 321.00,128.51" fill="none" stroke="#2AC62A" stroke-width="1.05"/>
<polyline points="252.14,194.41 254.05,192.57 256.28,191.08 258.15,189.20 260.02,187.30 261.96,185.50 264.02,183.82 266.12,182.19 267.93,180.23 270.07,178.65 271.91,176.73 273.76,174.82 275.92,173.25 277.99,171.59 279.60,169.40 281.79,167.88 283.77,166.11 286.02,164.65 288.03,162.92 289.68,160.78 291.97,159.37 293.88,157.53 295.55,155.41 297.65,153.78 299.42,151.78 301.81,150.48 303.70,148.61 305.82,147.00 307.74,145.17 309.64,143.32 311.66,141.60 313.54,139.72 315.25,137.64 317.51,136.20 319.15,134.04 321.21,132.37 323.40,130.85" fill="none" stroke="#2AC62A" stroke-width="1.05"/>
<polyline points="255.39,197.10 257.08,195.03 259.48,193.76 260.99,191.48 262.83,189.58 265.25,188.33 266.75,186.04 269.11,184.73 270.94,182.82 272.97,181.13 274.97,179.40 276.68,177.35 278.74,175.70 280.22,173.39 282.58,172.08 284.36,170.11 286.41,168.44 287.98,166.23 290.30,164.87 292.34,163.19 293.75,160.80 295.84,159.18 297.91,157.54 300.00,155.92 301.58,153.72 303.47,151.88 305.45,150.13 307.60,148.58 309.61,146.87 311.33,144.83 313.24,143.01 315.19,141.23 317.09,139.40 319.06,137.64 320.80,135.62 322.98,134.10 324.91,132.30" fill="none" stroke="#2AC62A" stroke-width="1.05"/>
<polyline points="258.31,199.79 260.07,197.78 262.33,196.37 264.33,194.64 266.23,192.81 268.09,190.93 270.02,189.13 272.07,187.46 274.18,185.86 275.69,183.58 277.61,181.77 279.95,180.43 282.00,178.77 283.72,176.73 285.63,174.90 287.75,173.32 289.38,171.18 291.39,169.46 293.30,167.64 295.48,166.13 297.27,164.17 299.18,162.34 301.40,160.88 303.51,159.28 305.08,157.06 307.27,155.56 309.05,153.59 311.27,152.11 313.06,150.16 314.83,148.17 316.75,146.36 318.59,144.45 320.81,142.99 322.71,141.15 324.54,139.23 326.60,137.58 328.64,135.90" fill="none" stroke="#2AC62A" stroke-width="1.05"/>
<polyline points="259.88,202.47 262.18,201.00 263.89,198.85 265.98,197.13 267.91,195.23 270.14,193.68 272.15,191.86 274.01,189.88 275.97,188.02 278.13,186.38 280.22,184.66 281.97,182.55 284.18,180.97 286.32,179.32 288.05,177.18 289.92,175.22 291.93,173.41 294.23,171.94 296.22,170.10 298.40,168.49 300.35,166.61 302.00,164.39 303.99,162.55 306.04,160.80 308.01,158.94 310.33,157.49 312.44,155.79 314.48,154.01 316.11,151.77 318.48,150.37 320.17,148.20 322.25,146.47 324.44,144.87 326.07,142.63 328.09,140.83 330.54,139.52 332.36,137.49" fill="none" stroke="#2AC62A" stroke-width="1.05"/>
<polyline points="262.44,205.16 264.53,203.49 266.13,201.25 268.32,199.68 270.37,197.96 272.40,196.21 274.23,194.23 276.44,192.69 278.66,191.16 280.31,188.99 282.40,187.30 284.14,185.22 286.23,183.54 288.45,182.01 290.12,179.85 292.57,178.58 294.58,176.81 296.09,174.47 298.58,173.25 300.24,171.08 302.47,169.56 304.45,167.76 306.17,165.66 308.39,164.13 310.37,162.32 312.46,160.64 314.13,158.48 316.41,157.02 318.53,155.37 320.35,153.39 322.27,151.51 324.01,149.43 326.23,147.90 328.14,146.02 330.35,144.47 332.32,142.66 334.21,140.75" fill="none" stroke="#2AC62A" stroke-width="1.05"/>
<polyline points="265.48,207.85 267.54,206.15 269.24,204.05 271.64,202.74 273.48,200.79 275.14,198.65 277.60,197.40 279.10,195.08 281.19,193.42 283.40,191.89 285.30,190.02 287.26,188.20 289.29,186.47 291.15,184.55 293.04,182.66 294.94,180.78 296.85,178.92 299.21,177.56 301.21,175.80 303.06,173.87 305.15,172.21 306.90,170.16 308.83,168.31 310.87,166.60 313.14,165.14 314.62,162.79 316.87,161.31 318.70,159.35 320.98,157.91 322.71,155.84 324.68,154.04 326.70,152.29 328.76,150.60 330.87,148.96 332.60,146.89 334.87,145.43 336.64,143.41" fill="none" stroke="#2AC62A" stroke-width="1.05"/>
<polyline points="267.36,210.54 269.14,208.46 271.55,207.09 273.52,205.24 275.21,203.05 277.22,201.24 279.37,199.57 281.57,197.98 283.62,196.21 285.59,194.34 287.51,192.42 289.25,190.30 291.41,188.65 293.30,186.70 295.51,185.10 297.54,183.31 299.33,181.25 301.37,179.46 303.70,178.00 305.26,175.68 307.73,174.38 309.79,172.62 311.83,170.85 313.51,168.65 315.62,166.94 317.65,165.14 319.68,163.36 321.90,161.77 323.73,159.76 325.51,157.68 327.86,156.24 329.64,154.17 331.72,152.43 333.81,150.70 335.38,148.39 337.85,147.09 339.70,145.09" fill="none" stroke="#2AC62A" stroke-width="1.05"/>
<polyline points="270.85,213.22 272.83,211.40 274.68,209.41 276.88,207.84 278.60,205.70 280.88,204.21 282.97,202.51 284.86,200.57 286.94,198.85 289.18,197.31 291.14,195.46 292.70,193.15 295.10,191.79 297.00,189.87 298.67,187.68 300.86,186.09 302.79,184.20 304.71,182.29 306.99,180.80 309.23,179.26 310.87,177.05 313.20,175.62 315.11,173.70 316.78,171.51 319.22,170.20 321.07,168.22 323.27,166.64 325.15,164.70 327.17,162.91 328.94,160.84 331.22,159.35 333.30,157.63 335.27,155.78 337.02,153.69 339.22,152.10 341.07,150.12 343.08,148.33" fill="none" stroke="#2AC62A" stroke-width="1.05"/>
<polyline points="272.57,215.91 274.40,213.88 276.38,212.03 278.59,210.43 280.72,208.74 282.63,206.81 284.57,204.90 286.71,203.23 288.52,201.17 290.62,199.45 292.80,197.82 294.60,195.76 296.47,193.78 298.91,192.44 300.81,190.49 302.61,188.43 304.62,186.61 306.72,184.89 308.77,183.11 310.55,181.03 312.43,179.05 314.56,177.37 316.91,175.93 318.54,173.67 320.73,172.06 322.58,170.05 324.60,168.23 326.59,166.38 328.73,164.71 330.60,162.73 332.52,160.81 334.58,159.04 336.62,157.25 338.82,155.64 340.58,153.52 342.56,151.67 344.85,150.17" fill="none" stroke="#2AC62A" stroke-width="1.05"/>
<polyline points="275.72,218.60 277.47,216.49 279.71,214.93 281.73,213.12 283.53,211.07 286.11,209.90 287.69,207.60 289.64,205.71 291.89,204.17 293.73,202.16 296.03,200.66 297.89,198.67 299.78,196.72 301.76,194.87 304.19,193.52 305.94,191.42 308.27,189.96 310.10,187.94 312.40,186.45 314.05,184.23 316.05,182.39 318.08,180.60 320.43,179.17 322.34,177.24 324.20,175.25 326.07,173.27 328.45,171.87 330.64,170.26 332.44,168.20 334.12,166.00 336.16,164.22 338.22,162.46 340.29,160.71 342.23,158.82 344.27,157.03 346.65,155.63 348.58,153.73" fill="none" stroke="#2AC62A" stroke-width="1.05"/>
<path d="M300.5,114 l2.5,-3 l2,0 l1.5,-1.5 l1.5,1 l-2,2.5 l-2,0 l-2,2 z" fill="#C040C0" />
<rect x="157.2" y="239.3" width="251.8" height="17.5" fill="#CFDDEE" />
<text x="158.5" y="251.8" font-size="12" fill="#111" textLength="85" lengthAdjust="spacingAndGlyphs" stroke="#111" stroke-width="0.1" >Single Beam View</text>
<rect x="390.1" y="243.1" width="3.5" height="4" fill="#fff" />
<rect x="389.1" y="246.9" width="5.5" height="1" fill="#fff" />
<rect x="391.40000000000003" y="247.6" width="1" height="2.5" fill="#fff" />
<rect x="398.6" y="242.6" width="8.3" height="7.6" fill="#D43A2F" />
<path d="M400.8,244.6 l3.9,3.6 M404.70000000000005,244.6 l-3.9,3.6" fill="none" stroke="#fff" stroke-width="1.2" />
<rect x="157" y="256.8" width="252" height="95" fill="#000" />
<line x1="181" y1="263.6" x2="405" y2="263.6" stroke="#B4B4B4" stroke-width="1" />
<line x1="177.5" y1="263.6" x2="181" y2="263.6" stroke="#CFCFCF" stroke-width="1" />
<text x="158.3" y="266.90000000000003" font-size="9" fill="#E4E4E4" textLength="18.3" lengthAdjust="spacingAndGlyphs" >131.0</text>
<line x1="181" y1="271.02000000000004" x2="405" y2="271.02000000000004" stroke="#B4B4B4" stroke-width="1" />
<line x1="177.5" y1="271.02000000000004" x2="181" y2="271.02000000000004" stroke="#CFCFCF" stroke-width="1" />
<text x="158.3" y="274.32000000000005" font-size="9" fill="#E4E4E4" textLength="18.3" lengthAdjust="spacingAndGlyphs" >132.0</text>
<line x1="181" y1="278.44" x2="405" y2="278.44" stroke="#B4B4B4" stroke-width="1" />
<line x1="177.5" y1="278.44" x2="181" y2="278.44" stroke="#CFCFCF" stroke-width="1" />
<text x="158.3" y="281.74" font-size="9" fill="#E4E4E4" textLength="18.3" lengthAdjust="spacingAndGlyphs" >133.0</text>
<line x1="181" y1="285.86" x2="405" y2="285.86" stroke="#B4B4B4" stroke-width="1" />
<line x1="177.5" y1="285.86" x2="181" y2="285.86" stroke="#CFCFCF" stroke-width="1" />
<text x="158.3" y="289.16" font-size="9" fill="#E4E4E4" textLength="18.3" lengthAdjust="spacingAndGlyphs" >134.0</text>
<line x1="181" y1="293.28000000000003" x2="405" y2="293.28000000000003" stroke="#B4B4B4" stroke-width="1" />
<line x1="177.5" y1="293.28000000000003" x2="181" y2="293.28000000000003" stroke="#CFCFCF" stroke-width="1" />
<text x="158.3" y="296.58000000000004" font-size="9" fill="#E4E4E4" textLength="18.3" lengthAdjust="spacingAndGlyphs" >135.0</text>
<line x1="181" y1="300.70000000000005" x2="405" y2="300.70000000000005" stroke="#B4B4B4" stroke-width="1" />
<line x1="177.5" y1="300.70000000000005" x2="181" y2="300.70000000000005" stroke="#CFCFCF" stroke-width="1" />
<text x="158.3" y="304.00000000000006" font-size="9" fill="#E4E4E4" textLength="18.3" lengthAdjust="spacingAndGlyphs" >136.0</text>
<line x1="181" y1="308.12" x2="405" y2="308.12" stroke="#B4B4B4" stroke-width="1" />
<line x1="177.5" y1="308.12" x2="181" y2="308.12" stroke="#CFCFCF" stroke-width="1" />
<text x="158.3" y="311.42" font-size="9" fill="#E4E4E4" textLength="18.3" lengthAdjust="spacingAndGlyphs" >137.0</text>
<line x1="181" y1="315.54" x2="405" y2="315.54" stroke="#B4B4B4" stroke-width="1" />
<line x1="177.5" y1="315.54" x2="181" y2="315.54" stroke="#CFCFCF" stroke-width="1" />
<text x="158.3" y="318.84000000000003" font-size="9" fill="#E4E4E4" textLength="18.3" lengthAdjust="spacingAndGlyphs" >138.0</text>
<line x1="181" y1="322.96000000000004" x2="405" y2="322.96000000000004" stroke="#B4B4B4" stroke-width="1" />
<line x1="177.5" y1="322.96000000000004" x2="181" y2="322.96000000000004" stroke="#CFCFCF" stroke-width="1" />
<text x="158.3" y="326.26000000000005" font-size="9" fill="#E4E4E4" textLength="18.3" lengthAdjust="spacingAndGlyphs" >139.0</text>
<line x1="181" y1="330.38" x2="405" y2="330.38" stroke="#B4B4B4" stroke-width="1" />
<line x1="177.5" y1="330.38" x2="181" y2="330.38" stroke="#CFCFCF" stroke-width="1" />
<text x="158.3" y="333.68" font-size="9" fill="#E4E4E4" textLength="18.3" lengthAdjust="spacingAndGlyphs" >140.0</text>
<line x1="180.6" y1="261" x2="180.6" y2="337" stroke="#CFCFCF" stroke-width="1" />
<line x1="254.2" y1="261" x2="254.2" y2="337" stroke="#CFCFCF" stroke-width="1" />
<line x1="327.9" y1="261" x2="327.9" y2="337" stroke="#CFCFCF" stroke-width="1" />
<line x1="401.4" y1="261" x2="401.4" y2="337" stroke="#CFCFCF" stroke-width="1" />
<text x="158.8" y="345.4" font-size="9.3" fill="#E4E4E4" textLength="44.8" lengthAdjust="spacingAndGlyphs" >17:28:46.000</text>
<text x="232.5" y="345.4" font-size="9.3" fill="#E4E4E4" textLength="44.8" lengthAdjust="spacingAndGlyphs" >17:29:03.000</text>
<text x="306" y="345.4" font-size="9.3" fill="#E4E4E4" textLength="44.8" lengthAdjust="spacingAndGlyphs" >17:29:20.000</text>
<text x="380" y="345.4" font-size="9.3" fill="#E4E4E4" textLength="29" lengthAdjust="spacingAndGlyphs" >17:29:37</text>
<polyline points="182.0,283.7 184.8,281.7 187.6,278.8 190.0,297.3 192.4,298.9 194.0,292.5 197.2,324.5 198.8,303.7 203.6,278.0 206.0,301.3 209.3,306.0 210.9,307.7 213.3,302.0 215.7,303.0 218.0,299.0 220.5,296.5 222.9,303.7 225.3,278.8 227.7,290.9 230.1,278.8 232.5,295.7 235.0,274.0 239.7,287.7 243.7,272.4 246.0,290.9 249.3,296.5 251.0,301.3 253.4,271.6 256.4,299.7 258.8,300.5 261.2,267.6 263.6,298.9 266.0,278.8 268.4,272.4 270.8,272.4 273.2,298.0 275.6,288.5 278.0,275.6 280.5,310.9 282.9,314.1 285.3,277.2 287.7,272.4 290.0,272.4 293.3,277.2" fill="none" stroke="#18C8D0" stroke-width="0.9"/>
<rect x="180.7" y="282.4" width="2.6" height="2.6" fill="#18C8D0" />
<rect x="183.5" y="280.37139452325795" width="2.6" height="2.6" fill="#18C8D0" />
<rect x="186.29999999999998" y="277.5" width="2.6" height="2.6" fill="#18C8D0" />
<rect x="188.7" y="296.0" width="2.6" height="2.6" fill="#18C8D0" />
<rect x="191.1" y="297.59999999999997" width="2.6" height="2.6" fill="#18C8D0" />
<rect x="192.7" y="291.2" width="2.6" height="2.6" fill="#18C8D0" />
<rect x="195.89999999999998" y="323.2" width="2.6" height="2.6" fill="#18C8D0" />
<rect x="197.5" y="302.4" width="2.6" height="2.6" fill="#18C8D0" />
<rect x="202.29999999999998" y="276.7" width="2.6" height="2.6" fill="#18C8D0" />
<rect x="204.7" y="300.0" width="2.6" height="2.6" fill="#18C8D0" />
<rect x="208.0" y="304.7" width="2.6" height="2.6" fill="#18C8D0" />
<rect x="209.6" y="306.4" width="2.6" height="2.6" fill="#18C8D0" />
<rect x="212.0" y="300.7" width="2.6" height="2.6" fill="#18C8D0" />
<rect x="214.39999999999998" y="301.7" width="2.6" height="2.6" fill="#18C8D0" />
<rect x="216.7" y="297.7" width="2.6" height="2.6" fill="#18C8D0" />
<rect x="219.2" y="295.2" width="2.6" height="2.6" fill="#18C8D0" />
<rect x="221.6" y="302.4" width="2.6" height="2.6" fill="#18C8D0" />
<rect x="224.0" y="277.5" width="2.6" height="2.6" fill="#18C8D0" />
<rect x="226.39999999999998" y="289.59999999999997" width="2.6" height="2.6" fill="#18C8D0" />
<rect x="228.79999999999998" y="277.5" width="2.6" height="2.6" fill="#18C8D0" />
<rect x="231.2" y="294.4" width="2.6" height="2.6" fill="#18C8D0" />
<rect x="233.7" y="272.7" width="2.6" height="2.6" fill="#18C8D0" />
<rect x="238.39999999999998" y="286.4" width="2.6" height="2.6" fill="#18C8D0" />
<rect x="242.39999999999998" y="271.09999999999997" width="2.6" height="2.6" fill="#18C8D0" />
<rect x="244.7" y="289.59999999999997" width="2.6" height="2.6" fill="#18C8D0" />
<rect x="248.0" y="295.2" width="2.6" height="2.6" fill="#18C8D0" />
<rect x="249.7" y="300.0" width="2.6" height="2.6" fill="#18C8D0" />
<rect x="252.1" y="270.3" width="2.6" height="2.6" fill="#18C8D0" />
<rect x="255.09999999999997" y="298.4" width="2.6" height="2.6" fill="#18C8D0" />
<rect x="257.5" y="299.2" width="2.6" height="2.6" fill="#18C8D0" />
<rect x="259.9" y="266.3" width="2.6" height="2.6" fill="#18C8D0" />
<rect x="262.3" y="297.59999999999997" width="2.6" height="2.6" fill="#18C8D0" />
<rect x="264.7" y="277.5" width="2.6" height="2.6" fill="#18C8D0" />
<rect x="267.09999999999997" y="271.09999999999997" width="2.6" height="2.6" fill="#18C8D0" />
<rect x="269.5" y="271.09999999999997" width="2.6" height="2.6" fill="#18C8D0" />
<rect x="271.9" y="296.7" width="2.6" height="2.6" fill="#18C8D0" />
<rect x="274.3" y="287.2" width="2.6" height="2.6" fill="#18C8D0" />
<rect x="276.7" y="274.3" width="2.6" height="2.6" fill="#18C8D0" />
<rect x="279.2" y="309.59999999999997" width="2.6" height="2.6" fill="#18C8D0" />
<rect x="281.59999999999997" y="312.8" width="2.6" height="2.6" fill="#18C8D0" />
<rect x="284.0" y="275.9" width="2.6" height="2.6" fill="#18C8D0" />
<rect x="286.4" y="271.09999999999997" width="2.6" height="2.6" fill="#18C8D0" />
<rect x="288.7" y="271.09999999999997" width="2.6" height="2.6" fill="#18C8D0" />
<rect x="292.0" y="275.9" width="2.6" height="2.6" fill="#18C8D0" />
<polyline points="334.0,278.0 335.6,278.0 337.2,292.5 339.6,298.0 342.0,309.3 344.4,294.9 346.8,281.2 350.0,276.4 351.6,294.0 354.0,275.6 356.5,294.9 358.9,275.6 361.3,306.1 363.7,282.0 366.0,275.6 368.5,294.9 370.9,296.5 373.3,282.0 375.7,304.5 377.3,278.0 380.5,276.4 382.9,291.7 386.1,278.0 389.3,291.7 391.7,275.6 394.1,273.2 397.3,276.4 401.3,290.0 403.7,299.7 404.5,290.0" fill="none" stroke="#18C8D0" stroke-width="0.9"/>
<rect x="332.7" y="276.7" width="2.6" height="2.6" fill="#18C8D0" />
<rect x="334.3" y="276.7" width="2.6" height="2.6" fill="#18C8D0" />
<rect x="335.9" y="291.2" width="2.6" height="2.6" fill="#18C8D0" />
<rect x="338.3" y="296.7" width="2.6" height="2.6" fill="#18C8D0" />
<rect x="340.7" y="308.0" width="2.6" height="2.6" fill="#18C8D0" />
<rect x="343.09999999999997" y="293.59999999999997" width="2.6" height="2.6" fill="#18C8D0" />
<rect x="345.5" y="279.9" width="2.6" height="2.6" fill="#18C8D0" />
<rect x="348.7" y="275.09999999999997" width="2.6" height="2.6" fill="#18C8D0" />
<rect x="350.3" y="292.7" width="2.6" height="2.6" fill="#18C8D0" />
<rect x="352.7" y="274.3" width="2.6" height="2.6" fill="#18C8D0" />
<rect x="355.2" y="293.59999999999997" width="2.6" height="2.6" fill="#18C8D0" />
<rect x="357.59999999999997" y="274.3" width="2.6" height="2.6" fill="#18C8D0" />
<rect x="360.0" y="304.8" width="2.6" height="2.6" fill="#18C8D0" />
<rect x="362.4" y="280.7" width="2.6" height="2.6" fill="#18C8D0" />
<rect x="364.7" y="274.3" width="2.6" height="2.6" fill="#18C8D0" />
<rect x="367.2" y="293.59999999999997" width="2.6" height="2.6" fill="#18C8D0" />
<rect x="369.59999999999997" y="295.2" width="2.6" height="2.6" fill="#18C8D0" />
<rect x="372.0" y="280.7" width="2.6" height="2.6" fill="#18C8D0" />
<rect x="374.4" y="303.2" width="2.6" height="2.6" fill="#18C8D0" />
<rect x="376.0" y="276.7" width="2.6" height="2.6" fill="#18C8D0" />
<rect x="379.2" y="275.09999999999997" width="2.6" height="2.6" fill="#18C8D0" />
<rect x="381.59999999999997" y="290.4" width="2.6" height="2.6" fill="#18C8D0" />
<rect x="384.8" y="276.7" width="2.6" height="2.6" fill="#18C8D0" />
<rect x="388.0" y="290.4" width="2.6" height="2.6" fill="#18C8D0" />
<rect x="390.4" y="274.3" width="2.6" height="2.6" fill="#18C8D0" />
<rect x="392.8" y="271.9" width="2.6" height="2.6" fill="#18C8D0" />
<rect x="396.0" y="275.09999999999997" width="2.6" height="2.6" fill="#18C8D0" />
<rect x="400.0" y="288.7" width="2.6" height="2.6" fill="#18C8D0" />
<rect x="402.4" y="298.4" width="2.6" height="2.6" fill="#18C8D0" />
<rect x="403.2" y="288.7" width="2.6" height="2.6" fill="#18C8D0" />
<polyline points="294.0,295.7 296.5,275.6 298.9,274.8 301.3,303.7 303.7,272.4 306.1,296.5 308.5,295.7 311.7,275.6 315.7,294.0 319.7,295.7 321.3,272.4 325.3,274.0 329.3,278.8 333.4,272.4" fill="none" stroke="#E8F4C8" stroke-width="0.8"/>
<rect x="292.8" y="294.5" width="2.4" height="2.4" fill="#E8F4C8" />
<rect x="295.3" y="274.40000000000003" width="2.4" height="2.4" fill="#E8F4C8" />
<rect x="297.7" y="273.6" width="2.4" height="2.4" fill="#E8F4C8" />
<rect x="300.1" y="302.5" width="2.4" height="2.4" fill="#E8F4C8" />
<rect x="302.5" y="271.2" width="2.4" height="2.4" fill="#E8F4C8" />
<rect x="304.90000000000003" y="295.3" width="2.4" height="2.4" fill="#E8F4C8" />
<rect x="307.3" y="294.5" width="2.4" height="2.4" fill="#E8F4C8" />
<rect x="310.5" y="274.40000000000003" width="2.4" height="2.4" fill="#E8F4C8" />
<rect x="314.5" y="292.8" width="2.4" height="2.4" fill="#E8F4C8" />
<rect x="318.5" y="294.5" width="2.4" height="2.4" fill="#E8F4C8" />
<rect x="320.1" y="271.2" width="2.4" height="2.4" fill="#E8F4C8" />
<rect x="324.1" y="272.8" width="2.4" height="2.4" fill="#E8F4C8" />
<rect x="328.1" y="277.6" width="2.4" height="2.4" fill="#E8F4C8" />
<rect x="332.2" y="271.2" width="2.4" height="2.4" fill="#E8F4C8" />
<polyline points="182.0,279.6 184.0,282.6 186.0,283.0 188.0,281.0 190.0,281.0 192.4,287.7 194.8,286.9 197.2,280.4 199.6,288.5 202.0,282.0 204.0,285.5 206.0,286.0 209.3,281.0 211.2,279.9 213.0,280.0 214.9,278.0 218.0,286.9 221.3,277.2 223.7,278.9 226.0,278.0 228.2,278.9 230.3,275.4 232.5,276.4 235.0,282.8 237.0,279.8 239.0,278.0 241.1,277.5 243.2,277.8 245.3,275.6 248.5,273.2 250.4,273.7 252.3,276.3 254.2,278.8 256.5,277.1 258.8,273.2 261.2,273.2 263.6,275.6 265.6,276.4 267.6,278.0 269.6,279.9 271.6,282.8 273.6,278.6 275.6,273.2 277.6,277.4 279.6,278.8 282.1,276.2 284.5,275.6 286.5,276.8 288.5,277.1 290.5,277.9 292.5,277.2" fill="none" stroke="#F4900F" stroke-width="1.0"/>
<rect x="180.7" y="278.3" width="2.6" height="2.6" fill="#F4900F" />
<rect x="182.7" y="281.28096271350967" width="2.6" height="2.6" fill="#F4900F" />
<rect x="184.7" y="281.7" width="2.6" height="2.6" fill="#F4900F" />
<rect x="186.7" y="279.74220325708063" width="2.6" height="2.6" fill="#F4900F" />
<rect x="188.7" y="279.7" width="2.6" height="2.6" fill="#F4900F" />
<rect x="191.1" y="286.4" width="2.6" height="2.6" fill="#F4900F" />
<rect x="193.5" y="285.59999999999997" width="2.6" height="2.6" fill="#F4900F" />
<rect x="195.89999999999998" y="279.09999999999997" width="2.6" height="2.6" fill="#F4900F" />
<rect x="198.29999999999998" y="287.2" width="2.6" height="2.6" fill="#F4900F" />
<rect x="200.7" y="280.7" width="2.6" height="2.6" fill="#F4900F" />
<rect x="202.7" y="284.2163110675194" width="2.6" height="2.6" fill="#F4900F" />
<rect x="204.7" y="284.7" width="2.6" height="2.6" fill="#F4900F" />
<rect x="208.0" y="279.7" width="2.6" height="2.6" fill="#F4900F" />
<rect x="209.86666666666667" y="278.626009257793" width="2.6" height="2.6" fill="#F4900F" />
<rect x="211.73333333333332" y="278.67148381420697" width="2.6" height="2.6" fill="#F4900F" />
<rect x="213.6" y="276.7" width="2.6" height="2.6" fill="#F4900F" />
<rect x="216.7" y="285.59999999999997" width="2.6" height="2.6" fill="#F4900F" />
<rect x="220.0" y="275.9" width="2.6" height="2.6" fill="#F4900F" />
<rect x="222.35" y="277.63560198191504" width="2.6" height="2.6" fill="#F4900F" />
<rect x="224.7" y="276.7" width="2.6" height="2.6" fill="#F4900F" />
<rect x="226.86666666666665" y="277.5749541598628" width="2.6" height="2.6" fill="#F4900F" />
<rect x="229.03333333333333" y="274.1428111246978" width="2.6" height="2.6" fill="#F4900F" />
<rect x="231.2" y="275.09999999999997" width="2.6" height="2.6" fill="#F4900F" />
<rect x="233.7" y="281.5" width="2.6" height="2.6" fill="#F4900F" />
<rect x="235.7" y="278.47511364821383" width="2.6" height="2.6" fill="#F4900F" />
<rect x="237.7" y="276.7" width="2.6" height="2.6" fill="#F4900F" />
<rect x="239.79999999999998" y="276.2421839864611" width="2.6" height="2.6" fill="#F4900F" />
<rect x="241.9" y="276.528926262721" width="2.6" height="2.6" fill="#F4900F" />
<rect x="244.0" y="274.3" width="2.6" height="2.6" fill="#F4900F" />
<rect x="247.2" y="271.9" width="2.6" height="2.6" fill="#F4900F" />
<rect x="249.1" y="272.4475609687323" width="2.6" height="2.6" fill="#F4900F" />
<rect x="250.99999999999997" y="274.972320640503" width="2.6" height="2.6" fill="#F4900F" />
<rect x="252.89999999999998" y="277.5" width="2.6" height="2.6" fill="#F4900F" />
<rect x="255.2" y="275.81969798596054" width="2.6" height="2.6" fill="#F4900F" />
<rect x="257.5" y="271.9" width="2.6" height="2.6" fill="#F4900F" />
<rect x="259.90000000000003" y="271.86695574539846" width="2.6" height="2.6" fill="#F4900F" />
<rect x="262.3" y="274.3" width="2.6" height="2.6" fill="#F4900F" />
<rect x="264.3" y="275.1475628983322" width="2.6" height="2.6" fill="#F4900F" />
<rect x="266.3" y="276.7" width="2.6" height="2.6" fill="#F4900F" />
<rect x="268.3" y="278.56938251344" width="2.6" height="2.6" fill="#F4900F" />
<rect x="270.3" y="281.5" width="2.6" height="2.6" fill="#F4900F" />
<rect x="272.3" y="277.2761528439125" width="2.6" height="2.6" fill="#F4900F" />
<rect x="274.3" y="271.9" width="2.6" height="2.6" fill="#F4900F" />
<rect x="276.3" y="276.0712620831205" width="2.6" height="2.6" fill="#F4900F" />
<rect x="278.3" y="277.5" width="2.6" height="2.6" fill="#F4900F" />
<rect x="280.75" y="274.8588191947333" width="2.6" height="2.6" fill="#F4900F" />
<rect x="283.2" y="274.3" width="2.6" height="2.6" fill="#F4900F" />
<rect x="285.2" y="275.46734227811106" width="2.6" height="2.6" fill="#F4900F" />
<rect x="287.2" y="275.8486435505357" width="2.6" height="2.6" fill="#F4900F" />
<rect x="289.2" y="276.5741032823956" width="2.6" height="2.6" fill="#F4900F" />
<rect x="291.2" y="275.9" width="2.6" height="2.6" fill="#F4900F" />
<polyline points="334.0,278.0 336.4,274.8 338.4,274.6 340.4,275.4 342.4,273.2 344.4,273.2 346.8,274.5 349.2,276.4 351.6,281.2 354.0,285.3 356.5,279.6 358.9,274.8 361.3,280.4 363.7,274.8 366.0,279.6 369.3,278.8 371.7,282.8 373.3,290.0 376.5,280.4 378.9,278.8 382.1,283.6 385.3,278.8 387.7,272.4 390.9,286.0 394.1,282.0 397.3,277.2 400.5,274.0 403.7,278.0" fill="none" stroke="#F4900F" stroke-width="1.0"/>
<rect x="332.7" y="276.7" width="2.6" height="2.6" fill="#F4900F" />
<rect x="335.09999999999997" y="273.5" width="2.6" height="2.6" fill="#F4900F" />
<rect x="337.09999999999997" y="273.27067695520486" width="2.6" height="2.6" fill="#F4900F" />
<rect x="339.09999999999997" y="274.05520990333383" width="2.6" height="2.6" fill="#F4900F" />
<rect x="341.09999999999997" y="271.86104144577246" width="2.6" height="2.6" fill="#F4900F" />
<rect x="343.09999999999997" y="271.9" width="2.6" height="2.6" fill="#F4900F" />
<rect x="345.49999999999994" y="273.2271129712688" width="2.6" height="2.6" fill="#F4900F" />
<rect x="347.9" y="275.09999999999997" width="2.6" height="2.6" fill="#F4900F" />
<rect x="350.3" y="279.9" width="2.6" height="2.6" fill="#F4900F" />
<rect x="352.7" y="284.0" width="2.6" height="2.6" fill="#F4900F" />
<rect x="355.2" y="278.3" width="2.6" height="2.6" fill="#F4900F" />
<rect x="357.59999999999997" y="273.5" width="2.6" height="2.6" fill="#F4900F" />
<rect x="360.0" y="279.09999999999997" width="2.6" height="2.6" fill="#F4900F" />
<rect x="362.4" y="273.5" width="2.6" height="2.6" fill="#F4900F" />
<rect x="364.7" y="278.3" width="2.6" height="2.6" fill="#F4900F" />
<rect x="368.0" y="277.5" width="2.6" height="2.6" fill="#F4900F" />
<rect x="370.4" y="281.5" width="2.6" height="2.6" fill="#F4900F" />
<rect x="372.0" y="288.7" width="2.6" height="2.6" fill="#F4900F" />
<rect x="375.2" y="279.09999999999997" width="2.6" height="2.6" fill="#F4900F" />
<rect x="377.59999999999997" y="277.5" width="2.6" height="2.6" fill="#F4900F" />
<rect x="380.8" y="282.3" width="2.6" height="2.6" fill="#F4900F" />
<rect x="384.0" y="277.5" width="2.6" height="2.6" fill="#F4900F" />
<rect x="386.4" y="271.09999999999997" width="2.6" height="2.6" fill="#F4900F" />
<rect x="389.59999999999997" y="284.7" width="2.6" height="2.6" fill="#F4900F" />
<rect x="392.8" y="280.7" width="2.6" height="2.6" fill="#F4900F" />
<rect x="396.0" y="275.9" width="2.6" height="2.6" fill="#F4900F" />
<rect x="399.2" y="272.7" width="2.6" height="2.6" fill="#F4900F" />
<rect x="402.4" y="276.7" width="2.6" height="2.6" fill="#F4900F" />
<polyline points="294.0,276.0 295.5,277.6 297.0,282.0 298.5,281.4 300.0,278.0 302.0,288.0 303.5,281.9 305.0,276.0 307.0,290.0 308.5,284.3 310.0,281.0 311.5,277.3 313.0,277.0 314.5,284.1 316.0,289.0 318.0,279.0 319.5,282.0 321.0,284.0 322.5,281.6 324.0,277.0 325.5,280.9 327.0,286.0 328.5,280.9 330.0,276.0 331.5,276.3 333.0,280.0" fill="none" stroke="#F5E020" stroke-width="1.2"/>
<rect x="293.0" y="275.0" width="2" height="2" fill="#F5E020" />
<rect x="294.5" y="276.64702408926485" width="2" height="2" fill="#F5E020" />
<rect x="296.0" y="281.0" width="2" height="2" fill="#F5E020" />
<rect x="297.5" y="280.3973258324988" width="2" height="2" fill="#F5E020" />
<rect x="299.0" y="277.0" width="2" height="2" fill="#F5E020" />
<rect x="301.0" y="287.0" width="2" height="2" fill="#F5E020" />
<rect x="302.5" y="280.90307496283816" width="2" height="2" fill="#F5E020" />
<rect x="304.0" y="275.0" width="2" height="2" fill="#F5E020" />
<rect x="306.0" y="289.0" width="2" height="2" fill="#F5E020" />
<rect x="307.5" y="283.3472873278309" width="2" height="2" fill="#F5E020" />
<rect x="309.0" y="280.0" width="2" height="2" fill="#F5E020" />
<rect x="310.5" y="276.34871573399937" width="2" height="2" fill="#F5E020" />
<rect x="312.0" y="276.0" width="2" height="2" fill="#F5E020" />
<rect x="313.5" y="283.1031452846804" width="2" height="2" fill="#F5E020" />
<rect x="315.0" y="288.0" width="2" height="2" fill="#F5E020" />
<rect x="317.0" y="278.0" width="2" height="2" fill="#F5E020" />
<rect x="318.5" y="281.0285232109971" width="2" height="2" fill="#F5E020" />
<rect x="320.0" y="283.0" width="2" height="2" fill="#F5E020" />
<rect x="321.5" y="280.55313467595465" width="2" height="2" fill="#F5E020" />
<rect x="323.0" y="276.0" width="2" height="2" fill="#F5E020" />
<rect x="324.5" y="279.93399775585" width="2" height="2" fill="#F5E020" />
<rect x="326.0" y="285.0" width="2" height="2" fill="#F5E020" />
<rect x="327.5" y="279.93556961576394" width="2" height="2" fill="#F5E020" />
<rect x="329.0" y="275.0" width="2" height="2" fill="#F5E020" />
<rect x="330.5" y="275.2694471318899" width="2" height="2" fill="#F5E020" />
<rect x="332.0" y="279.0" width="2" height="2" fill="#F5E020" />
<rect x="157" y="351.8" width="252" height="11.5" fill="#F0F0F0" />
<line x1="157" y1="352.2" x2="409" y2="352.2" stroke="#FFFFFF" stroke-width="0.8" />
<path d="M165,354.8 l-3,3 l3,3" fill="none" stroke="#333" stroke-width="1.3" />
<rect x="169.3" y="353" width="14.5" height="9.9" fill="#CDCDCD" />
<path d="M401.5,354.5 l3,3 l-3,3" fill="none" stroke="#333" stroke-width="1.2" />
<rect x="411.5" y="101.7" width="185.5" height="17" fill="#CFDDEE" />
<text x="413" y="115.2" font-size="11.5" fill="#111" textLength="91" lengthAdjust="spacingAndGlyphs" stroke="#111" stroke-width="0.1" >Single Beam Editor</text>
<rect x="579.1" y="105.5" width="3.5" height="4" fill="#fff" />
<rect x="578.1" y="109.3" width="5.5" height="1" fill="#fff" />
<rect x="580.4" y="110" width="1" height="2.5" fill="#fff" />
<rect x="587.6" y="105" width="8.3" height="7.6" fill="#D43A2F" />
<path d="M589.8000000000001,107 l3.9,3.6 M593.7,107 l-3.9,3.6" fill="none" stroke="#fff" stroke-width="1.2" />
<rect x="411.5" y="118.7" width="175.7" height="235" fill="#F0F0F0" />
<rect x="414" y="137.3" width="172" height="220" fill="#F0F0F0" stroke="#A8A8A8" stroke-width="0.9" />
<line x1="415.2" y1="138" x2="415.2" y2="352" stroke="#FFFFFF" stroke-width="0.9" />
<line x1="415" y1="138.3" x2="586" y2="138.3" stroke="#FFFFFF" stroke-width="0.9" />
<rect x="452.6" y="125" width="30.4" height="12.5" fill="#F0F0F0" stroke="#D9D9D9" stroke-width="0.8" />
<text x="455.3" y="133.8" font-size="9.2" fill="#111" textLength="24" lengthAdjust="spacingAndGlyphs" stroke="#111" stroke-width="0.1" >Events</text>
<rect x="483" y="125" width="42" height="12.5" fill="#F0F0F0" stroke="#D9D9D9" stroke-width="0.8" />
<text x="487.7" y="133.8" font-size="9.2" fill="#111" textLength="33" lengthAdjust="spacingAndGlyphs" stroke="#111" stroke-width="0.1" >Barcheck</text>
<rect x="525" y="125" width="27.7" height="12.5" fill="#F0F0F0" stroke="#D9D9D9" stroke-width="0.8" />
<text x="529.7" y="133.8" font-size="9.2" fill="#111" textLength="20" lengthAdjust="spacingAndGlyphs" stroke="#111" stroke-width="0.1" >Trace</text>
<rect x="414.4" y="122.6" width="38.2" height="15.2" fill="#F0F0F0" stroke="#A8A8A8" stroke-width="0.9" />
<rect x="415" y="136.5" width="37" height="2.3" fill="#F0F0F0" />
<line x1="415.2" y1="123.3" x2="415.2" y2="138" stroke="#FFFFFF" stroke-width="0.9" />
<text x="420.7" y="132.2" font-size="9.2" fill="#111" textLength="27" lengthAdjust="spacingAndGlyphs" stroke="#111" stroke-width="0.1" >General</text>
<rect x="426.5" y="147.9" width="160" height="60.3" fill="none" stroke="#FFFFFF" stroke-width="0.9" />
<rect x="425.6" y="147" width="160" height="60.3" fill="none" stroke="#D0D0D0" stroke-width="0.9" />
<rect x="429.6" y="143" width="59" height="8" fill="#F0F0F0" />
<text x="431.6" y="150.5" font-size="9" fill="#111" textLength="55" lengthAdjust="spacingAndGlyphs" stroke="#111" stroke-width="0.1" >Horizontal Scale</text>
<circle cx="438" cy="159" r="4.2" fill="#fff" stroke="#333" stroke-width="0.9"/>
<circle cx="438" cy="159" r="2.2" fill="#111"/>
<text x="446" y="162.3" font-size="9" fill="#111" textLength="23" lengthAdjust="spacingAndGlyphs" stroke="#111" stroke-width="0.1" >by time</text>
<circle cx="438" cy="173.8" r="4.2" fill="#fff" stroke="#333" stroke-width="0.9"/>
<text x="446" y="177" font-size="9" fill="#111" textLength="38" lengthAdjust="spacingAndGlyphs" stroke="#111" stroke-width="0.1" >by distance</text>
<rect x="434" y="187.3" width="33.3" height="15.7" fill="#F6F6F6" stroke="#A8A8A8" stroke-width="0.9" />
<text x="435.8" y="196.8" font-size="10" fill="#111" textLength="15.5" lengthAdjust="spacingAndGlyphs" stroke="#111" stroke-width="0.1" >10.0</text>
<rect x="470" y="187.5" width="11" height="7.25" fill="#ECECEC" stroke="#ADADAD" stroke-width="0.8" />
<rect x="470" y="195.75" width="11" height="7.25" fill="#ECECEC" stroke="#ADADAD" stroke-width="0.8" />
<path d="M473.2,192.375 l2.3,-2.2 l2.3,2.2 z" fill="#111" />
<path d="M473.2,198.725 l2.3,2.2 l2.3,-2.2 z" fill="#111" />
<rect x="482.5" y="187.5" width="11" height="7.25" fill="#ECECEC" stroke="#ADADAD" stroke-width="0.8" />
<rect x="482.5" y="195.75" width="11" height="7.25" fill="#ECECEC" stroke="#ADADAD" stroke-width="0.8" />
<path d="M485.7,192.375 l2.3,-2.2 l2.3,2.2 z" fill="#111" />
<path d="M485.7,198.725 l2.3,2.2 l2.3,-2.2 z" fill="#111" />
<rect x="495" y="187.5" width="11" height="7.25" fill="#ECECEC" stroke="#ADADAD" stroke-width="0.8" />
<rect x="495" y="195.75" width="11" height="7.25" fill="#ECECEC" stroke="#ADADAD" stroke-width="0.8" />
<path d="M498.2,192.375 l2.3,-2.2 l2.3,2.2 z" fill="#111" />
<path d="M498.2,198.725 l2.3,2.2 l2.3,-2.2 z" fill="#111" />
<rect x="510" y="201.3" width="1.2" height="1.2" fill="#333" />
<rect x="514" y="187.5" width="11" height="7.25" fill="#ECECEC" stroke="#ADADAD" stroke-width="0.8" />
<rect x="514" y="195.75" width="11" height="7.25" fill="#ECECEC" stroke="#ADADAD" stroke-width="0.8" />
<path d="M517.2,192.375 l2.3,-2.2 l2.3,2.2 z" fill="#111" />
<path d="M517.2,198.725 l2.3,2.2 l2.3,-2.2 z" fill="#111" />
<text x="533.3" y="199.3" font-size="9" fill="#111" textLength="29.3" lengthAdjust="spacingAndGlyphs" stroke="#111" stroke-width="0.1" >cm / min</text>
<rect x="426.5" y="217.4" width="160" height="27.8" fill="none" stroke="#FFFFFF" stroke-width="0.9" />
<rect x="425.6" y="216.5" width="160" height="27.8" fill="none" stroke="#D0D0D0" stroke-width="0.9" />
<rect x="429.6" y="212.5" width="51" height="8" fill="#F0F0F0" />
<text x="431.6" y="220.0" font-size="9" fill="#111" textLength="47" lengthAdjust="spacingAndGlyphs" stroke="#111" stroke-width="0.1" >Vertical Scale</text>
<rect x="434" y="225" width="8.5" height="8.5" fill="#fff" stroke="#333" stroke-width="0.9" />
<path d="M435.8,229.5 l2,2.2 l3.2,-4.6" fill="none" stroke="#111" stroke-width="1.4" />
<text x="445" y="232.3" font-size="9" fill="#111" textLength="16.3" lengthAdjust="spacingAndGlyphs" stroke="#111" stroke-width="0.1" >Auto</text>
<rect x="470.5" y="222.5" width="33" height="15.5" fill="#F0F0F0" stroke="#D0D0D0" stroke-width="0.8" />
<text x="474" y="233.5" font-size="9.3" fill="#B0B0B0" stroke="#B0B0B0" stroke-width="0.1" >1</text>
<rect x="506" y="222.5" width="10" height="7.25" fill="#ECECEC" stroke="#ADADAD" stroke-width="0.8" />
<rect x="506" y="230.75" width="10" height="7.25" fill="#ECECEC" stroke="#ADADAD" stroke-width="0.8" />
<path d="M508.7,227.375 l2.3,-2.2 l2.3,2.2 z" fill="#111" />
<path d="M508.7,233.725 l2.3,2.2 l2.3,-2.2 z" fill="#111" />
<text x="520.5" y="233.5" font-size="9.3" fill="#111" textLength="6.5" lengthAdjust="spacingAndGlyphs" stroke="#111" stroke-width="0.1" >:1</text>
<rect x="426.5" y="253.9" width="160" height="27.7" fill="none" stroke="#FFFFFF" stroke-width="0.9" />
<rect x="425.6" y="253" width="160" height="27.7" fill="none" stroke="#D0D0D0" stroke-width="0.9" />
<rect x="429.6" y="249" width="62" height="8" fill="#F0F0F0" />
<text x="431.6" y="256.5" font-size="9" fill="#111" textLength="58" lengthAdjust="spacingAndGlyphs" stroke="#111" stroke-width="0.1" >Horizontal Labels</text>
<rect x="434" y="263" width="8.5" height="8.5" fill="#fff" stroke="#333" stroke-width="0.9" />
<path d="M435.8,267.5 l2,2.2 l3.2,-4.6" fill="none" stroke="#111" stroke-width="1.4" />
<text x="445" y="270.5" font-size="9" fill="#111" textLength="16.3" lengthAdjust="spacingAndGlyphs" stroke="#111" stroke-width="0.1" >Auto</text>
<rect x="470.5" y="261.5" width="33.5" height="15.5" fill="#F0F0F0" stroke="#D0D0D0" stroke-width="0.8" />
<text x="473.4" y="272.5" font-size="9" fill="#B0B0B0" textLength="8.2" lengthAdjust="spacingAndGlyphs" stroke="#B0B0B0" stroke-width="0.1" >30</text>
<rect x="509.5" y="261.5" width="10" height="7.25" fill="#ECECEC" stroke="#ADADAD" stroke-width="0.8" />
<rect x="509.5" y="269.75" width="10" height="7.25" fill="#ECECEC" stroke="#ADADAD" stroke-width="0.8" />
<path d="M512.2,266.375 l2.3,-2.2 l2.3,2.2 z" fill="#111" />
<path d="M512.2,272.725 l2.3,2.2 l2.3,-2.2 z" fill="#111" />
<rect x="521" y="261.5" width="10" height="7.25" fill="#ECECEC" stroke="#ADADAD" stroke-width="0.8" />
<rect x="521" y="269.75" width="10" height="7.25" fill="#ECECEC" stroke="#ADADAD" stroke-width="0.8" />
<path d="M523.7,266.375 l2.3,-2.2 l2.3,2.2 z" fill="#111" />
<path d="M523.7,272.725 l2.3,2.2 l2.3,-2.2 z" fill="#111" />
<text x="538.4" y="272.5" font-size="9" fill="#111" textLength="12" lengthAdjust="spacingAndGlyphs" stroke="#111" stroke-width="0.1" >sec</text>
<rect x="426.5" y="291.4" width="160" height="38.5" fill="none" stroke="#FFFFFF" stroke-width="0.9" />
<rect x="425.6" y="290.5" width="160" height="38.5" fill="none" stroke="#D0D0D0" stroke-width="0.9" />
<rect x="429.6" y="286.5" width="20.5" height="8" fill="#F0F0F0" />
<text x="431.6" y="294.0" font-size="9" fill="#111" textLength="16.5" lengthAdjust="spacingAndGlyphs" stroke="#111" stroke-width="0.1" >Data</text>
<rect x="434.5" y="300.3" width="8" height="8" fill="#fff" stroke="#333" stroke-width="0.9" />
<path d="M436.3,304.8 l2,2.2 l3.2,-4.6" fill="none" stroke="#111" stroke-width="1.4" />
<text x="445.5" y="307.6" font-size="9" fill="#111" textLength="25" lengthAdjust="spacingAndGlyphs" stroke="#111" stroke-width="0.1" >Primary</text>
<rect x="513.7" y="300.3" width="8" height="8" fill="#fff" stroke="#333" stroke-width="0.9" />
<path d="M515.5,304.8 l2,2.2 l3.2,-4.6" fill="none" stroke="#111" stroke-width="1.4" />
<text x="524.7" y="307.6" font-size="9" fill="#111" textLength="37" lengthAdjust="spacingAndGlyphs" stroke="#111" stroke-width="0.1" >Secondary</text>
<rect x="434.5" y="314.8" width="8" height="8" fill="#fff" stroke="#333" stroke-width="0.9" />
<path d="M436.3,319.3 l2,2.2 l3.2,-4.6" fill="none" stroke="#111" stroke-width="1.4" />
<text x="445.5" y="322.1" font-size="9" fill="#111" textLength="37" lengthAdjust="spacingAndGlyphs" stroke="#111" stroke-width="0.1" >Join Points</text>
<rect x="513.7" y="314.8" width="8" height="8" fill="#fff" stroke="#333" stroke-width="0.9" />
<path d="M515.5,319.3 l2,2.2 l3.2,-4.6" fill="none" stroke="#111" stroke-width="1.4" />
<text x="524.7" y="322.1" font-size="9" fill="#111" textLength="30.5" lengthAdjust="spacingAndGlyphs" stroke="#111" stroke-width="0.1" >Selected</text>
<rect x="426.5" y="341.4" width="160" height="20" fill="none" stroke="#FFFFFF" stroke-width="0.9" />
<rect x="425.6" y="340.5" width="160" height="20" fill="none" stroke="#D0D0D0" stroke-width="0.9" />
<rect x="429.6" y="336.5" width="22.5" height="8" fill="#F0F0F0" />
<text x="431.6" y="344.0" font-size="9" fill="#111" textLength="18.5" lengthAdjust="spacingAndGlyphs" stroke="#111" stroke-width="0.1" >Show</text>
<rect x="434.5" y="349.5" width="8" height="8" fill="#fff" stroke="#333" stroke-width="0.9" />
<path d="M436.3,354.0 l2,2.2 l3.2,-4.6" fill="none" stroke="#111" stroke-width="1.4" />
<rect x="513.7" y="349.5" width="8" height="8" fill="#fff" stroke="#333" stroke-width="0.9" />
<text x="446" y="357" font-size="9" fill="#111" textLength="16" lengthAdjust="spacingAndGlyphs" stroke="#111" stroke-width="0.1" >Data</text>
<text x="525" y="357" font-size="9" fill="#111" textLength="14" lengthAdjust="spacingAndGlyphs" stroke="#111" stroke-width="0.1" >Diff</text>
<rect x="411.5" y="352.4" width="175.7" height="10.5" fill="#F0F0F0" />
<rect x="423.6" y="353.1" width="125.3" height="9.2" fill="#CDCDCD" />
<path d="M419,355.5 l-2.5,2.5 l2.5,2.5" fill="none" stroke="#333" stroke-width="1.2" />
<path d="M578,355.5 l2.5,2.5 l-2.5,2.5" fill="none" stroke="#333" stroke-width="1.2" />
<rect x="587.2" y="119" width="10.3" height="234.6" fill="#F0F0F0" />
<rect x="587.5" y="131" width="9.700000000000001" height="153" fill="#CDCDCD" />
<path d="M589.35,126 l3,-3 l3,3" fill="none" stroke="#333" stroke-width="1.2" />
<path d="M589.35,346.6 l3,3 l3,-3" fill="none" stroke="#333" stroke-width="1.2" />
<rect x="299.8" y="367.8" width="297.2" height="16.7" fill="#CFDDEE" />
<text x="301.7" y="380.5" font-size="12" fill="#111" textLength="53" lengthAdjust="spacingAndGlyphs" stroke="#111" stroke-width="0.1" >Log Viewer</text>
<rect x="579.3" y="369.7" width="3.5" height="4" fill="#fff" />
<rect x="578.3" y="373.5" width="5.5" height="1" fill="#fff" />
<rect x="580.5999999999999" y="374.2" width="1" height="2.5" fill="#fff" />
<rect x="587.8" y="369.2" width="8.3" height="7.6" fill="#D43A2F" />
<path d="M590.0,371.2 l3.9,3.6 M593.9,371.2 l-3.9,3.6" fill="none" stroke="#fff" stroke-width="1.2" />
<rect x="299.8" y="384.5" width="297.2" height="80" fill="#F0F0F0" />
<rect x="300.3" y="385.6" width="111.5" height="77" fill="#fff" stroke="#A8A8A8" stroke-width="0.9" />
<rect x="415" y="387.2" width="16.5" height="15.4" fill="#CCE4F7" stroke="#66A8E6" stroke-width="0.8" />
<rect x="418" y="390" width="3" height="3" fill="#333" />
<rect x="422" y="390.5" width="5" height="2" fill="#8AA0C0" />
<rect x="418" y="396" width="3" height="3" fill="#333" />
<rect x="422" y="396.5" width="5" height="2" fill="#8AA0C0" />
<line x1="424.5" y1="389" x2="424.5" y2="400" stroke="#9FB4D0" stroke-width="0.8" />
<text x="433.5" y="394" font-size="6.5" fill="#2A68B8" textLength="5" lengthAdjust="spacingAndGlyphs" font-weight="bold" >A</text>
<text x="433.5" y="401" font-size="6.5" fill="#C0352C" textLength="5" lengthAdjust="spacingAndGlyphs" font-weight="bold" >Z</text>
<line x1="442.5" y1="389" x2="442.5" y2="399" stroke="#111" stroke-width="1.1" />
<path d="M440.8,397 l1.7,3 l1.7,-3 z" fill="#111" />
<line x1="450" y1="390" x2="450" y2="400" stroke="#9C9C9C" stroke-width="0.9" />
<rect x="456.5" y="388.5" width="7" height="4" fill="#F4F4F4" stroke="#C8C8C8" stroke-width="0.8" />
<rect x="454.5" y="392" width="11" height="6" fill="#DADADA" stroke="#C4C4C4" stroke-width="0.6" />
<rect x="456.5" y="396" width="7" height="4" fill="#F4F4F4" stroke="#C8C8C8" stroke-width="0.8" />
<path d="M472,388.5 l6,0 l2.5,2.5 l0,9 l-8.5,0 z" fill="#F8F8F8" stroke="#C8C8C8" stroke-width="0.8" />
<circle cx="477.5" cy="396" r="2.5" fill="none" stroke="#C8C8C8" stroke-width="0.9"/>
<line x1="479.5" y1="398" x2="482" y2="400.5" stroke="#C8C8C8" stroke-width="1" />
<rect x="415" y="405" width="182" height="45" fill="#fff" />
<line x1="415" y1="405.3" x2="597" y2="405.3" stroke="#9A9A9A" stroke-width="0.9" />
<line x1="415.3" y1="405" x2="415.3" y2="450" stroke="#9A9A9A" stroke-width="0.9" />
<rect x="415" y="450" width="182" height="14.5" fill="#F0F0F0" />
<line x1="415" y1="450.2" x2="597" y2="450.2" stroke="#A0A0A0" stroke-width="0.9" />
<line x1="415" y1="464.7" x2="597" y2="464.7" stroke="#A0A0A0" stroke-width="0.9" />
<line x1="415.3" y1="450" x2="415.3" y2="465" stroke="#C0C0C0" stroke-width="0.8" />
<rect x="366" y="464.5" width="70" height="15.5" fill="#F0F0F0" stroke="#D9D9D9" stroke-width="0.8" />
<text x="381.5" y="476" font-size="10.3" fill="#111" textLength="48.5" lengthAdjust="spacingAndGlyphs" stroke="#111" stroke-width="0.1" >TPU Analysis</text>
<rect x="300" y="464" width="66" height="16.5" fill="#fff" stroke="#D9D9D9" stroke-width="0.8" />
<circle cx="303.6" cy="467.6" r="1" fill="#1D3A78"/>
<path d="M304.5,471.8 q3,-0.5 4.5,-3 M303.5,476 q6,-1 8.5,-6.5" fill="none" stroke="#1D3A78" stroke-width="1.4" />
<text x="315.5" y="476" font-size="10.2" fill="#111" textLength="43.3" lengthAdjust="spacingAndGlyphs" stroke="#111" stroke-width="0.1" >Log Viewer</text>
<circle cx="372" cy="470" r="3" fill="none" stroke="#333" stroke-width="1.1"/>
<path d="M372,473 l0,3 M375,470 l2,0" fill="none" stroke="#333" stroke-width="1" />
<circle cx="376" cy="474" r="1.8" fill="none" stroke="#333" stroke-width="0.9"/>
<rect x="597.6" y="101.4" width="19.2" height="195.3" fill="#F5F6F7" />
<line x1="597.6" y1="296.7" x2="616.8" y2="296.7" stroke="#D5D5D5" stroke-width="0.8" />
<rect x="597.6" y="297.5" width="19.2" height="120.5" fill="#F5F6F7" />
<line x1="597.6" y1="418" x2="616.8" y2="418" stroke="#D5D5D5" stroke-width="0.8" />
<rect x="597.6" y="418.5" width="19.2" height="61" fill="#F5F6F7" />
<rect x="601" y="105" width="1" height="1" fill="#9A9A9A" />
<rect x="604" y="105" width="1" height="1" fill="#9A9A9A" />
<rect x="607" y="105" width="1" height="1" fill="#9A9A9A" />
<rect x="610" y="105" width="1" height="1" fill="#9A9A9A" />
<rect x="613" y="105" width="1" height="1" fill="#9A9A9A" />
<rect x="601" y="301" width="1" height="1" fill="#9A9A9A" />
<rect x="604" y="301" width="1" height="1" fill="#9A9A9A" />
<rect x="607" y="301" width="1" height="1" fill="#9A9A9A" />
<rect x="610" y="301" width="1" height="1" fill="#9A9A9A" />
<rect x="613" y="301" width="1" height="1" fill="#9A9A9A" />
<rect x="601" y="423.5" width="1" height="1" fill="#9A9A9A" />
<rect x="604" y="423.5" width="1" height="1" fill="#9A9A9A" />
<rect x="607" y="423.5" width="1" height="1" fill="#9A9A9A" />
<rect x="610" y="423.5" width="1" height="1" fill="#9A9A9A" />
<rect x="613" y="423.5" width="1" height="1" fill="#9A9A9A" />
<path d="M601,118 l7,-4 l6,5 l-7,4 z" fill="#3A75C4" />
<circle cx="607.5" cy="118.5" r="1.6" fill="#fff"/>
<rect x="603" y="113" width="2" height="2" fill="#F05A2A" />
<line x1="601" y1="128.5" x2="614" y2="128.5" stroke="#555" stroke-width="1.1" />
<circle cx="608" cy="140" r="3.6" fill="none" stroke="#CDCDCD" stroke-width="1.1"/>
<circle cx="608" cy="140" r="1.4" fill="#CDCDCD"/>
<rect x="602.5" y="134" width="1.5" height="1.5" fill="#CDCDCD" />
<line x1="603" y1="160" x2="613" y2="151" stroke="#CDCDCD" stroke-width="1.1" />
<rect x="603" y="150" width="1.5" height="1.5" fill="#CDCDCD" />
<path d="M602,169 l11,-1 l0,5 l-3,3 l-8,0 z" fill="#D6D6D6" />
<rect x="602.5" y="166" width="1.5" height="1.5" fill="#CDCDCD" />
<path d="M603,182 l1.5,1.5 M606,186 l5,0 l-3,5 l3,0" fill="none" stroke="#CDCDCD" stroke-width="1" />
<path d="M603,205.5 q0,-4 5,-4 l4,0 M610.5,200.0 l2,1.5 l-2,1.5 M613,207.5 q0,4 -5,4 l-4,0 M605.5,213.0 l-2,-1.5 l2,-1.5" fill="none" stroke="#CDCDCD" stroke-width="1.1" />
<rect x="606" y="205.0" width="4" height="3" fill="none" stroke="#CDCDCD" stroke-width="0.8" />
<line x1="605" y1="226" x2="613" y2="218" stroke="#CDCDCD" stroke-width="1.6" />
<circle cx="604" cy="227" r="1.8" fill="none" stroke="#CDCDCD" stroke-width="0.9"/>
<line x1="605" y1="241" x2="613" y2="233" stroke="#CDCDCD" stroke-width="1.6" />
<circle cx="604" cy="242" r="1.8" fill="none" stroke="#CDCDCD" stroke-width="0.9"/>
<rect x="602.5" y="252" width="6" height="6" fill="#F2F2F2" stroke="#CDCDCD" stroke-width="0.9" />
<rect x="606.5" y="256" width="6.5" height="7" fill="#F2F2F2" stroke="#CDCDCD" stroke-width="0.9" />
<path d="M603,269 l6,0 q3,0 3,3 l-4,0 l4,3 l-9,0 z" fill="none" stroke="#CDCDCD" stroke-width="1" />
<line x1="601" y1="196" x2="614" y2="196" stroke="#BBBBBB" stroke-width="1" />
<line x1="601" y1="247" x2="614" y2="247" stroke="#BBBBBB" stroke-width="1" />
<path d="M604,287.5 l-3,2.8 l3,2.8 z" fill="#111" />
<line x1="603" y1="318" x2="613" y2="309" stroke="#CDCDCD" stroke-width="1.1" />
<rect x="603" y="308" width="1.5" height="1.5" fill="#CDCDCD" />
<path d="M603,323.5 q8,0 3,5 q-5,5 4,5" fill="none" stroke="#CDCDCD" stroke-width="1.1" />
<path d="M603,340 q8,0 3,5 q-5,5 4,5" fill="none" stroke="#CDCDCD" stroke-width="1.1" />
<path d="M603,355 q8,0 3,5 q-5,5 4,5" fill="none" stroke="#CDCDCD" stroke-width="1.1" />
<rect x="602.5" y="374" width="6" height="6" fill="#F2F2F2" stroke="#CDCDCD" stroke-width="0.9" />
<rect x="606.5" y="378" width="6.5" height="7" fill="#F2F2F2" stroke="#CDCDCD" stroke-width="0.9" />
<line x1="605" y1="400" x2="613" y2="392" stroke="#CDCDCD" stroke-width="1.6" />
<circle cx="604" cy="401" r="1.8" fill="none" stroke="#CDCDCD" stroke-width="0.9"/>
<line x1="601" y1="370" x2="614" y2="370" stroke="#BBBBBB" stroke-width="1" />
<path d="M604,409.5 l-3,2.8 l3,2.8 z" fill="#111" />
<path d="M603,439 l3,-3 l3,2 l3,-5" fill="none" stroke="#C8C8C8" stroke-width="1" />
<path d="M603,456 l3,-3 l3,2 l3,-5" fill="none" stroke="#C8C8C8" stroke-width="1" />
<path d="M604,470 l-3,2.8 l3,2.8 z" fill="#111" />
<path d="M609,469 l2.2,2 l2.2,-2 M609,472.5 l2.2,2 l2.2,-2" fill="none" stroke="#111" stroke-width="1.1" />
<rect x="4" y="480" width="613" height="13.8" fill="#F0F0F0" />
<line x1="4" y1="481.3" x2="617" y2="481.3" stroke="#D8D8D8" stroke-width="1" />
<line x1="4.5" y1="482" x2="4.5" y2="493.5" stroke="#FAFAFA" stroke-width="1" />
<line x1="351.3" y1="481" x2="351.3" y2="493" stroke="#D5D5D5" stroke-width="1" />
<line x1="415" y1="481" x2="415" y2="493" stroke="#D5D5D5" stroke-width="1" />
<line x1="493" y1="481" x2="493" y2="493" stroke="#D5D5D5" stroke-width="1" />
<line x1="577" y1="481" x2="577" y2="493" stroke="#D5D5D5" stroke-width="1" />
<text x="355.7" y="491.5" font-size="10" fill="#111" textLength="42" lengthAdjust="spacingAndGlyphs" stroke="#111" stroke-width="0.1" >Selected: 0</text>
<text x="418" y="491.5" font-size="10" fill="#111" textLength="49.6" lengthAdjust="spacingAndGlyphs" stroke="#111" stroke-width="0.1" >EPSG:32612</text>
<text x="496" y="491.5" font-size="10" fill="#111" textLength="37.8" lengthAdjust="spacingAndGlyphs" stroke="#111" stroke-width="0.1" >1:141580</text>
<text x="580.6" y="491.5" font-size="10" fill="#111" textLength="23" lengthAdjust="spacingAndGlyphs" stroke="#111" stroke-width="0.1" >68-17</text>
<rect x="612" y="490" width="1" height="1" fill="#AAAAAA" />
<rect x="614" y="490" width="1" height="1" fill="#AAAAAA" />
<rect x="614" y="488" width="1" height="1" fill="#AAAAAA" />
<rect x="612" y="488" width="1" height="1" fill="#AAAAAA" />
<rect x="614" y="486" width="1" height="1" fill="#AAAAAA" />
</svg></body></html>
